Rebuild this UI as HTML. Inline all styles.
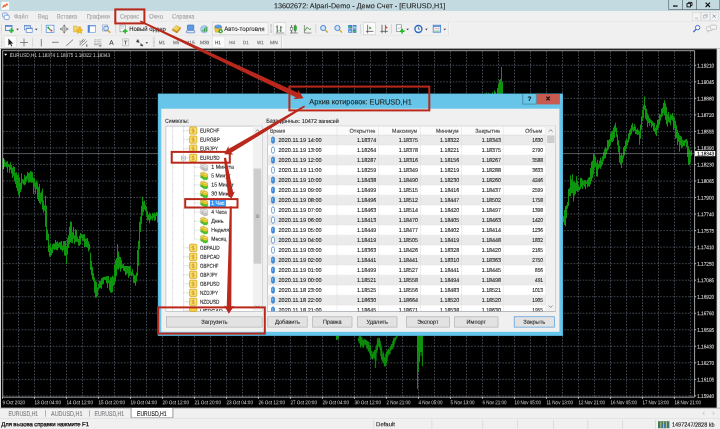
<!DOCTYPE html>
<html lang="ru"><head><meta charset="utf-8"><title>13602672: Alpari-Demo - Демо Счет - [EURUSD,H1]</title>
<style>
html,body{margin:0;padding:0}
body{width:720px;height:429px;overflow:hidden;position:relative;background:#f0f0f0;font-family:"Liberation Sans",sans-serif}
.t{position:absolute;left:0;top:0;white-space:nowrap;line-height:1;display:block;transform-origin:0 0;-webkit-text-stroke:0.1px currentColor}
svg{position:absolute;left:0;top:0;overflow:visible}
</style></head><body><div id="app" style="position:absolute;left:0;top:0;width:720px;height:429px;will-change:transform">
<svg width="720" height="429" viewBox="0 0 720 429"><rect x="0.00" y="0.00" width="720.00" height="11.20" fill="#c4dae1"/><rect x="1.50" y="1.80" width="7.60" height="8.00" fill="#fdfdfd"/></svg>
<svg width="720" height="12" viewBox="0 0 720 12"><path d="M2.6 7.6 L4.2 5.2 L5.2 6.3 L6.6 4.2 L8 5" fill="none" stroke="#e8642a" stroke-width="1.3"/></svg>
<span class="t" style="transform:translate(273.90px,2.13px) rotate(0.03deg) scale(1.0000,1);font-size:7.2px;color:#1c1c1c;letter-spacing:0.038px;">13602672: Alpari-Demo - Демо Счет - [EURUSD,H1]</span>
<svg width="720" height="429" viewBox="0 0 720 429"><rect x="668.30" y="0.00" width="51.70" height="9.80" fill="#c4dae1"/><path d="M668.60 0.00 V9.50 H719.70 V0.00" fill="none" stroke="#4a5558" stroke-width="0.6"/><rect x="682.30" y="0.00" width="0.60" height="9.60" fill="#4a5558"/><rect x="696.20" y="0.00" width="0.60" height="9.60" fill="#4a5558"/><rect x="673.00" y="5.40" width="4.60" height="1.30" fill="#111"/></svg>
<svg width="720" height="12" viewBox="0 0 720 12"><rect x="687" y="3.6" width="3.6" height="3.3" fill="none" stroke="#111" stroke-width="0.9"/><path d="M688.4 3.4 V2.4 H692 V5.6 H690.8" fill="none" stroke="#111" stroke-width="0.9"/><path d="M705.6 2.6 L710 7 M710 2.6 L705.6 7" stroke="#111" stroke-width="1.2"/></svg>
<svg width="720" height="429" viewBox="0 0 720 429"><rect x="0.00" y="11.20" width="720.00" height="10.40" fill="#f0f0f0"/><rect x="0.00" y="21.40" width="720.00" height="0.50" fill="#dcdcdc"/></svg>
<svg width="720" height="24" viewBox="0 0 720 24"><rect x="2.6" y="13" width="4.6" height="4" rx="0.8" fill="#fff" stroke="#6a8fd0" stroke-width="0.8"/><rect x="4.2" y="15.2" width="5" height="4.2" rx="0.8" fill="#fff" stroke="#6a8fd0" stroke-width="0.8"/></svg>
<span class="t" style="transform:translate(14.00px,13.52px) rotate(0.1deg) scale(0.8898,1);font-size:6.4px;color:#a2a2a2;">Файл</span>
<span class="t" style="transform:translate(38.00px,13.57px) rotate(0.1deg) scale(0.8637,1);font-size:6.4px;color:#a2a2a2;">Вид</span>
<span class="t" style="transform:translate(57.00px,13.47px) rotate(0.1deg) scale(0.8408,1);font-size:6.4px;color:#a2a2a2;">Вставка</span>
<span class="t" style="transform:translate(86.70px,13.47px) rotate(0.1deg) scale(0.9159,1);font-size:6.4px;color:#a2a2a2;">Графики</span>
<span class="t" style="transform:translate(120.00px,13.48px) rotate(0.1deg) scale(0.8669,1);font-size:6.4px;color:#a2a2a2;">Сервис</span>
<span class="t" style="transform:translate(149.00px,13.52px) rotate(0.1deg) scale(0.9414,1);font-size:6.4px;color:#a2a2a2;">Окно</span>
<span class="t" style="transform:translate(172.00px,13.47px) rotate(0.1deg) scale(0.8962,1);font-size:6.4px;color:#a2a2a2;">Справка</span>
<svg width="720" height="429" viewBox="0 0 720 429"><rect x="692.30" y="12.20" width="8.40" height="8.20" fill="#f4f4f4"/><rect x="692.55" y="12.45" width="7.90" height="7.70" fill="none" stroke="#d0d0d0" stroke-width="0.5"/><rect x="701.20" y="12.20" width="8.40" height="8.20" fill="#f4f4f4"/><rect x="701.45" y="12.45" width="7.90" height="7.70" fill="none" stroke="#d0d0d0" stroke-width="0.5"/><rect x="710.10" y="12.20" width="8.40" height="8.20" fill="#f4f4f4"/><rect x="710.35" y="12.45" width="7.90" height="7.70" fill="none" stroke="#d0d0d0" stroke-width="0.5"/></svg>
<svg width="720" height="24" viewBox="0 0 720 24"><path d="M695 18.2 h3" stroke="#a9b4c4" stroke-width="0.9"/><rect x="703.6" y="15.6" width="2.6" height="2.4" fill="none" stroke="#a9b4c4" stroke-width="0.7"/><path d="M704.8 15.4 v-1 h2.6 v2.4 h-1" fill="none" stroke="#a9b4c4" stroke-width="0.7"/><path d="M712.6 14.6 l3.2 3.2 m0 -3.2 l-3.2 3.2" stroke="#7f95b8" stroke-width="0.9"/></svg>
<svg width="720" height="429" viewBox="0 0 720 429"><rect x="0.00" y="21.90" width="720.00" height="26.60" fill="#f0f0f0"/><rect x="0.00" y="35.00" width="449.00" height="0.50" fill="#e2e2e2"/><rect x="448.60" y="22.50" width="0.60" height="12.50" fill="#cdcdcd"/><rect x="449.20" y="22.50" width="0.80" height="12.50" fill="#fafafa"/><rect x="281.20" y="36.00" width="0.70" height="12.00" fill="#c4c4c4"/><rect x="281.90" y="36.00" width="0.90" height="12.00" fill="#fafafa"/></svg>
<span class="t" style="transform:translate(85.80px,44.76px) rotate(0.03deg) scale(1.0000,1);font-size:3.2px;color:#333;">E</span>
<span class="t" style="transform:translate(99.60px,44.96px) rotate(0.03deg) scale(1.0000,1);font-size:3.2px;color:#333;">F</span>
<span class="t" style="transform:translate(109.20px,39.84px) rotate(0.03deg) scale(1.0000,1);font-size:6.6px;color:#333;">A</span>
<span class="t" style="transform:translate(123.95px,40.39px) rotate(0.03deg) scale(1.0000,1);font-size:5.4px;color:#222;">T</span>
<svg width="720" height="50" viewBox="0 0 720 50">
<path d="M1.4 24.5 V33.5" stroke="#b8b8b8" stroke-width="0.9" stroke-dasharray="0.6 0.6"/>
<path d="M1.8 37.5 V46.8" stroke="#b8b8b8" stroke-width="0.9" stroke-dasharray="0.6 0.6"/>
<rect x="5.4" y="25.4" width="6.6" height="5.2" fill="#eef4fc" stroke="#4a78c2" stroke-width="0.8"/><path d="M5.4 26.2 h6.6" stroke="#4a78c2" stroke-width="1"/>
<path d="M9.0 30.6 h4.8 M11.4 28.200000000000003 v4.8" stroke="#2bb52b" stroke-width="1.7"/>
<path d="M16.2 28.7 h2.6 l-1.3 1.5 z" fill="#333"/>
<rect x="24.4" y="25.4" width="6" height="4.4" fill="#f6f9fe" stroke="#5a86cc" stroke-width="0.7"/><path d="M24.4 25.9 h6" stroke="#5a86cc" stroke-width="0.9"/><rect x="26.2" y="28" width="6" height="4.4" fill="#f6f9fe" stroke="#5a86cc" stroke-width="0.7"/><path d="M26.2 28.5 h6" stroke="#5a86cc" stroke-width="0.9"/>
<path d="M35.0 28.7 h2.6 l-1.3 1.5 z" fill="#333"/>
<path d="M41.5 24 V33.5" stroke="#c4c4c4" stroke-width="0.6"/>
<rect x="46.2" y="25.2" width="7.8" height="7.4" fill="#f4f8ff" stroke="#4f8ad6" stroke-width="0.7"/><path d="M48 27.6 l2.4 2.4" stroke="#2c9a2c" stroke-width="1.1"/><circle cx="51.4" cy="30.6" r="1.1" fill="#e0552c"/><circle cx="48.2" cy="27.4" r="0.9" fill="#2c9a2c"/>
<circle cx="64.2" cy="29" r="2.4" fill="none" stroke="#666" stroke-width="0.6"/><path d="M64.2 24.8 v8.4 M60 29 h8.4" stroke="#666" stroke-width="0.5"/><path d="M64.2 24.6 l-1 1.3 h2 z M64.2 33.4 l-1 -1.3 h2 z M59.8 29 l1.3 -1 v2 z M68.6 29 l-1.3 -1 v2 z" fill="#666"/>
<path d="M73.6 26 h3 l0.8 0.9 h3.6 v5 h-7.4 z" fill="#f3d36a" stroke="#c9a030" stroke-width="0.5"/><path d="M79.6 27.6 l1 2 l2.2 0.3 l-1.6 1.5 l0.4 2.2 l-2 -1.1 l-2 1.1 l0.4 -2.2 l-1.6 -1.5 l2.2 -0.3 z" fill="#f6c21c" stroke="#c48f10" stroke-width="0.4"/>
<rect x="88" y="25.4" width="7.6" height="7" fill="#fbfdff" stroke="#5a8fd8" stroke-width="0.6"/><rect x="88" y="25.4" width="1.8" height="7" fill="#4a80d0"/><path d="M88 25.8 h7.6" stroke="#4a80d0" stroke-width="0.8"/>
<rect x="102.4" y="25" width="5.4" height="6" fill="#f2f6fb" stroke="#8aa0bc" stroke-width="0.6"/><circle cx="106" cy="28.4" r="2.4" fill="#cfe2f6" stroke="#4f7fbf" stroke-width="0.8"/><path d="M107.8 30.4 l2.6 2.4" stroke="#d9a62a" stroke-width="1.3"/>
<path d="M115.7 24 V33.5" stroke="#c4c4c4" stroke-width="0.6"/>
<rect x="120" y="25" width="5.4" height="6.8" fill="#fff" stroke="#7c8796" stroke-width="0.6"/><path d="M121 26.6 h3.4 M121 28 h3.4" stroke="#9aa5b4" stroke-width="0.5"/>
<path d="M122.9 31.2 h4.6 M125.2 28.9 v4.6" stroke="#2bb52b" stroke-width="1.7"/>
<path d="M172.6 29.2 l3.4 -3.8 l4.4 2.2 l-3.2 4 z" fill="#f4cf52" stroke="#b98a1c" stroke-width="0.45"/><path d="M172.6 29.2 l4.6 2.4 l-0.2 1.4 l-4.6 -2.5 z" fill="#d49a22" stroke="#a87612" stroke-width="0.35"/><path d="M177.2 31.6 l3.2 -4 l0 1.3 l-3.4 4.1 z" fill="#c98f1c" stroke="#a87612" stroke-width="0.35"/><path d="M174.2 28.6 l2.4 -2.4" stroke="#fbe9a8" stroke-width="0.6"/>
<rect x="187.4" y="25" width="6.4" height="4.8" rx="0.6" fill="#5d9be6" stroke="#2e62b4" stroke-width="0.6"/><rect x="186.4" y="30.6" width="8.4" height="2.2" rx="0.5" fill="#e9f0fa" stroke="#2e62b4" stroke-width="0.6"/>
<circle cx="204.2" cy="29.2" r="3.7" fill="#a9cdf0" stroke="#8aa9c8" stroke-width="0.5"/><path d="M203 31.6 v-1.6 M204.6 31.6 v-3.2 M206.2 31.6 v-4.8" stroke="#2c9a2c" stroke-width="1"/>
<rect x="212.3" y="22.7" width="55.8" height="12" fill="#f6f6f6" stroke="#cfcfcf" stroke-width="0.6"/>
<path d="M214.6 27.2 h7.2 l-0.8 5 h-5.6 z" fill="#f0c53a" stroke="#b48a1a" stroke-width="0.5"/><ellipse cx="218.2" cy="26.6" rx="3.4" ry="1.7" fill="#5c9ee2" stroke="#2f68b6" stroke-width="0.5"/><circle cx="220.6" cy="31.2" r="1.9" fill="#2fb52f" stroke="#1d7f1d" stroke-width="0.4"/><path d="M220 30.2 l1.6 1 l-1.6 1 z" fill="#fff"/>
<path d="M270.6 24 V33.5" stroke="#b8b8b8" stroke-width="0.9" stroke-dasharray="0.6 0.6"/>
<path d="M271.6 24 V33.5" stroke="#b8b8b8" stroke-width="0.9" stroke-dasharray="0.6 0.6"/>
<rect x="273.8" y="22.7" width="12" height="12" fill="#fafafa" stroke="#cfcfcf" stroke-width="0.6"/>
<path d="M277.2 25.4 v7 M280.8 26 v6" stroke="#333" stroke-width="0.8"/><path d="M275.8 26.8 h1.4 M277.2 31 h1.4 M280.8 27.4 h1.4 M279.4 30.4 h1.4" stroke="#2c9a2c" stroke-width="0.8"/><path d="M275.6 33 h8.6" stroke="#555" stroke-width="0.6"/>
<path d="M291.6 25 v8 M295.2 24.6 v8" stroke="#333" stroke-width="0.7"/><rect x="294" y="26" width="2.4" height="4.4" fill="#2fae2f" stroke="#1c6f1c" stroke-width="0.4"/><rect x="290.8" y="27.4" width="1.6" height="3" fill="#fff" stroke="#333" stroke-width="0.4"/><path d="M290 33 h7.8" stroke="#555" stroke-width="0.6"/>
<path d="M304.4 25 v8 h7" fill="none" stroke="#555" stroke-width="0.6"/><path d="M304.6 31 l2.4 -3.8 l2.2 2.2 l2 -0.6" fill="none" stroke="#2c9a2c" stroke-width="0.9"/>
<path d="M315.8 24 V33.5" stroke="#c4c4c4" stroke-width="0.6"/>
<circle cx="323.2" cy="28" r="2.6" fill="#cfe4f8" stroke="#3f7fd0" stroke-width="0.9"/><path d="M325.2 30.1 l2.6 2.5" stroke="#d9a62a" stroke-width="1.4"/>
<circle cx="337.4" cy="28" r="2.6" fill="#cfe4f8" stroke="#3f7fd0" stroke-width="0.9"/><path d="M339.4 30.1 l2.6 2.5" stroke="#d9a62a" stroke-width="1.4"/>
<rect x="348.2" y="25" width="3.8" height="3.6" fill="#3f7fd0"/><rect x="352.6" y="25" width="3.8" height="3.6" fill="#3f7fd0"/><rect x="348.2" y="29.2" width="3.8" height="3.6" fill="#3f7fd0"/><rect x="352.6" y="29.2" width="3.8" height="3.6" fill="#3f7fd0"/><rect x="348.8" y="26.4" width="2.6" height="1.6" fill="#49b949"/><rect x="353.2" y="30.6" width="2.6" height="1.6" fill="#49b949"/><rect x="353.2" y="26.4" width="2.6" height="1.6" fill="#a9cdf5"/><rect x="348.8" y="30.6" width="2.6" height="1.6" fill="#a9cdf5"/>
<path d="M360.6 24 V33.5" stroke="#c4c4c4" stroke-width="0.6"/>
<rect x="363.3" y="22.7" width="12" height="12" fill="#fafafa" stroke="#cfcfcf" stroke-width="0.6"/>
<path d="M367.6 24.8 v8.4 M366 31.4 h7.4" stroke="#444" stroke-width="0.7"/><path d="M369.4 26.4 l2.2 1.6 l-2.2 1.6 z" fill="#2c9a2c"/>
<path d="M382 24.8 v8.4 M385.4 24.8 v8.4 M380.4 31.4 h7.4" stroke="#444" stroke-width="0.7"/><path d="M385.6 26 l2.2 1.5 l-2.2 1.5 z" fill="#d04a2a"/>
<path d="M391.4 24 V33.5" stroke="#c4c4c4" stroke-width="0.6"/>
<rect x="396.6" y="24.8" width="5" height="6.6" fill="#fff" stroke="#6e7a8a" stroke-width="0.6"/><path d="M397.6 29.6 l1.2 -2 l1 1 l1 -2" fill="none" stroke="#888" stroke-width="0.5"/>
<path d="M399.8 31.2 h4.8 M402.2 28.8 v4.8" stroke="#2bb52b" stroke-width="1.7"/>
<path d="M406.3 28.7 h2.6 l-1.3 1.5 z" fill="#333"/>
<circle cx="418.4" cy="29" r="3.5" fill="#eaf2fc" stroke="#2f68c0" stroke-width="1.4"/><path d="M418.4 26.8 v2.4 h1.6" fill="none" stroke="#333" stroke-width="0.6"/>
<path d="M425.1 28.7 h2.6 l-1.3 1.5 z" fill="#333"/>
<rect x="433.2" y="25.2" width="7.4" height="7" fill="#f4f8ff" stroke="#3f7fd0" stroke-width="0.8"/><path d="M433.2 26.2 h7.4" stroke="#3f7fd0" stroke-width="1.2"/><path d="M434.4 29 l1.4 -1 l1.4 1 l1.4 -0.8 l1.2 0.8" fill="none" stroke="#d04a2a" stroke-width="0.5"/><path d="M434.4 31 h5.2" stroke="#2c9a2c" stroke-width="0.6"/>
<path d="M443.5 28.7 h2.6 l-1.3 1.5 z" fill="#333"/>
<circle cx="697.6" cy="27.6" r="2.2" fill="#fff" stroke="#2f62c8" stroke-width="0.9"/><path d="M696 29.4 l-2.6 2.6" stroke="#2f62c8" stroke-width="1.2"/>
<rect x="706.4" y="26.8" width="6" height="3.8" rx="1.2" fill="#f6f6f6" stroke="#a8a8a8" stroke-width="0.6"/><rect x="710.2" y="25.2" width="6.4" height="4" rx="1.2" fill="#f6f6f6" stroke="#a8a8a8" stroke-width="0.6"/><path d="M708 30.6 l-0.6 1.6 l1.8 -1.6" fill="#f6f6f6" stroke="#a8a8a8" stroke-width="0.5"/>
<rect x="4.2" y="36" width="12.4" height="11.4" fill="#fbfbfb" stroke="#d4d4d4" stroke-width="0.5"/>
<path d="M8.4 38.4 v7 l1.7 -1.6 l1.2 2.6 l0.9 -0.4 l-1.2 -2.5 h2.2 z" fill="#222"/>
<path d="M24 38.6 v7.8 M20 42.5 h8" stroke="#333" stroke-width="0.55"/>
<path d="M32.6 37.5 V47" stroke="#c4c4c4" stroke-width="0.6"/>
<path d="M41.3 39 v7.4" stroke="#555" stroke-width="0.7"/><path d="M52 42.3 h6.8" stroke="#555" stroke-width="0.7"/><path d="M66.3 45.8 l6.8 -6.2" stroke="#555" stroke-width="0.7"/>
<path d="M80 44.6 l5.6 -5 M81.6 46 l5.6 -5 M80.2 42.6 l4 -3.6" stroke="#555" stroke-width="0.6"/><path d="M80 40 v6 M82.4 39.4 v3" stroke="#777" stroke-width="0.4"/>
<path d="M94 39.8 h7.4 M94 41.6 h7.4 M94 43.4 h7.4" stroke="#666" stroke-width="0.5" stroke-dasharray="0.8 0.5"/><path d="M94 44.8 h5" stroke="#666" stroke-width="0.5"/>
<rect x="122.6" y="38.8" width="6" height="7" fill="none" stroke="#777" stroke-width="0.5" stroke-dasharray="0.7 0.5"/>
<path d="M136.6 40.2 l2.2 1.8 M138 39.6 l1.2 2.8 l-2.8 -0.6 z" stroke="#444" stroke-width="0.6" fill="#444"/><path d="M140 43.6 l2.6 2 M143 46 l-2.6 -0.4 l1.2 -1.8 z" stroke="#444" stroke-width="0.6" fill="#444"/>
<path d="M145.5 42.2 h2.6 l-1.3 1.5 z" fill="#333"/>
<path d="M153.4 37.5 V46.8" stroke="#b8b8b8" stroke-width="0.9" stroke-dasharray="0.6 0.6"/>
<path d="M154.4 37.5 V46.8" stroke="#b8b8b8" stroke-width="0.9" stroke-dasharray="0.6 0.6"/>
<rect x="212.5" y="36.2" width="12.4" height="11.4" fill="#fafafa" stroke="#dcdcdc" stroke-width="0.5"/>
</svg>
<span class="t" style="transform:translate(129.20px,26.08px) rotate(0.1deg) scale(0.9156,1);font-size:6.5px;color:#111;-webkit-text-stroke:0.04px #111">Новый ордер</span>
<span class="t" style="transform:translate(224.20px,26.07px) rotate(0.1deg) scale(0.9435,1);font-size:6.5px;color:#111;-webkit-text-stroke:0.04px #111">Авто-торговля</span>
<span class="t" style="transform:translate(158.70px,41.35px) rotate(0.1deg) scale(0.9255,1);font-size:4.9px;color:#666;">M1</span>
<span class="t" style="transform:translate(173.00px,41.35px) rotate(0.1deg) scale(0.9108,1);font-size:4.9px;color:#666;">M5</span>
<span class="t" style="transform:translate(185.00px,41.35px) rotate(0.03deg) scale(1.0000,1);font-size:4.9px;color:#666;letter-spacing:0.056px;">M15</span>
<span class="t" style="transform:translate(200.00px,41.35px) rotate(0.03deg) scale(1.0000,1);font-size:4.9px;color:#666;letter-spacing:-0.111px;">M30</span>
<span class="t" style="transform:translate(215.00px,41.35px) rotate(0.1deg) scale(0.9259,1);font-size:4.9px;color:#444;">H1</span>
<span class="t" style="transform:translate(229.20px,41.35px) rotate(0.1deg) scale(0.9259,1);font-size:4.9px;color:#666;">H4</span>
<span class="t" style="transform:translate(243.00px,41.35px) rotate(0.1deg) scale(0.9100,1);font-size:4.9px;color:#666;">D1</span>
<span class="t" style="transform:translate(257.00px,41.35px) rotate(0.1deg) scale(0.9116,1);font-size:4.9px;color:#666;">W1</span>
<span class="t" style="transform:translate(270.00px,41.35px) rotate(0.03deg) scale(1.0000,1);font-size:4.9px;color:#666;letter-spacing:0.190px;">MN</span>
<svg width="720" height="429" viewBox="0 0 720 429"><rect x="0.00" y="48.50" width="720.00" height="360.00" fill="#000"/><rect x="0.00" y="48.00" width="720.00" height="0.50" fill="#fafafa"/><rect x="0.00" y="48.50" width="720.00" height="0.60" fill="#808080"/><rect x="0.00" y="49.00" width="720.00" height="1.00" fill="#262626"/><rect x="0.00" y="48.50" width="1.00" height="360.00" fill="#d8d8d8"/><rect x="716.70" y="48.50" width="3.30" height="360.00" fill="#e6e6e6"/><rect x="716.70" y="48.50" width="0.70" height="360.00" fill="#6a6a6a"/><rect x="717.40" y="48.50" width="1.00" height="360.00" fill="#fdfdfd"/></svg>
<svg width="720" height="429" viewBox="0 0 720 429">
<path d="M18.5 51 V397 M34.5 51 V397 M50.5 51 V397 M66.5 51 V397 M82.5 51 V397 M98.5 51 V397 M114.5 51 V397 M130.5 51 V397 M146.5 51 V397 M162.5 51 V397 M178.5 51 V397 M194.5 51 V397 M210.5 51 V397 M226.5 51 V397 M242.5 51 V397 M258.5 51 V397 M274.5 51 V397 M290.5 51 V397 M306.5 51 V397 M322.5 51 V397 M338.5 51 V397 M354.5 51 V397 M370.5 51 V397 M386.5 51 V397 M402.5 51 V397 M418.5 51 V397 M434.5 51 V397 M450.5 51 V397 M466.5 51 V397 M482.5 51 V397 M498.5 51 V397 M514.5 51 V397 M530.5 51 V397 M546.5 51 V397 M562.5 51 V397 M578.5 51 V397 M594.5 51 V397 M610.5 51 V397 M626.5 51 V397 M642.5 51 V397 M658.5 51 V397 M674.5 51 V397 M690.5 51 V397 M3 65.30 H694.5 M3 81.83 H694.5 M3 98.36 H694.5 M3 114.89 H694.5 M3 131.42 H694.5 M3 147.95 H694.5 M3 164.48 H694.5 M3 181.01 H694.5 M3 197.54 H694.5 M3 214.07 H694.5 M3 230.60 H694.5 M3 247.13 H694.5 M3 263.66 H694.5 M3 280.19 H694.5 M3 296.72 H694.5 M3 313.25 H694.5 M3 329.78 H694.5 M3 346.31 H694.5 M3 362.84 H694.5 M3 379.37 H694.5 M3 395.90 H694.5" stroke="#6f7d8d" stroke-width="0.85" stroke-dasharray="1.7 1.4" fill="none" opacity="0.66"/>
<path d="M2.7 50.7 V397.2 H694.6 V50.7 Z" fill="none" stroke="#c9c9c9" stroke-width="0.8"/>
<path d="M2.5 397 v1.8 M34.5 397 v1.8 M66.5 397 v1.8 M98.5 397 v1.8 M130.5 397 v1.8 M162.5 397 v1.8 M194.5 397 v1.8 M226.5 397 v1.8 M258.5 397 v1.8 M290.5 397 v1.8 M322.5 397 v1.8 M354.5 397 v1.8 M386.5 397 v1.8 M418.5 397 v1.8 M450.5 397 v1.8 M482.5 397 v1.8 M514.5 397 v1.8 M546.5 397 v1.8 M578.5 397 v1.8 M610.5 397 v1.8 M642.5 397 v1.8 M674.5 397 v1.8 M694.6 65.30 h1.6 M694.6 81.83 h1.6 M694.6 98.36 h1.6 M694.6 114.89 h1.6 M694.6 131.42 h1.6 M694.6 147.95 h1.6 M694.6 164.48 h1.6 M694.6 181.01 h1.6 M694.6 197.54 h1.6 M694.6 214.07 h1.6 M694.6 230.60 h1.6 M694.6 247.13 h1.6 M694.6 263.66 h1.6 M694.6 280.19 h1.6 M694.6 296.72 h1.6 M694.6 313.25 h1.6 M694.6 329.78 h1.6 M694.6 346.31 h1.6 M694.6 362.84 h1.6 M694.6 379.37 h1.6 M694.6 395.90 h1.6" stroke="#d8d8d8" stroke-width="0.8" fill="none"/>
<path d="M3.50 161.8V169.2 M4.50 159.5V167.0 M5.50 162.3V166.6 M6.50 161.6V167.5 M7.50 161.2V172.5 M8.50 164.1V167.2 M9.50 164.2V172.9 M10.50 162.4V169.9 M11.50 165.1V173.6 M12.50 167.7V178.0 M13.50 166.1V175.9 M14.50 167.0V181.4 M15.50 172.8V184.0 M16.50 172.3V187.9 M17.50 175.2V191.3 M18.50 173.8V195.1 M19.50 177.4V197.8 M20.50 182.9V192.2 M21.50 173.3V189.5 M22.50 179.1V183.3 M23.50 179.5V184.5 M24.50 174.8V185.1 M25.50 176.7V184.5 M26.50 175.6V181.5 M27.50 172.0V179.4 M28.50 172.9V182.8 M29.50 172.6V182.5 M30.50 171.2V182.2 M31.50 171.4V182.7 M32.50 172.2V182.6 M33.50 177.5V194.0 M34.50 177.8V187.2 M35.50 182.4V194.0 M36.50 180.7V189.3 M37.50 182.4V199.0 M38.50 186.9V201.0 M39.50 184.0V203.0 M40.50 193.2V204.3 M41.50 191.4V201.7 M42.50 188.7V209.5 M43.50 200.5V212.5 M44.50 205.3V210.8 M45.50 195.8V226.7 M46.50 205.8V240.3 M47.50 229.4V240.3 M48.50 233.8V251.9 M49.50 245.2V256.5 M50.50 243.2V256.7 M51.50 247.5V255.0 M52.50 244.3V253.0 M53.50 243.6V249.1 M54.50 243.5V250.0 M55.50 240.0V249.3 M56.50 242.1V250.0 M57.50 241.3V250.4 M58.50 243.3V248.3 M59.50 242.2V246.9 M60.50 241.8V249.6 M61.50 240.9V249.9 M62.50 245.4V251.6 M63.50 241.0V250.0 M64.50 241.0V255.5 M65.50 241.0V255.9 M66.50 245.9V264.0 M67.50 238.2V254.8 M68.50 235.3V248.0 M69.50 226.8V244.0 M70.50 221.5V242.2 M71.50 221.8V242.8 M72.50 232.2V243.2 M73.50 226.8V238.9 M74.50 235.3V244.2 M75.50 229.2V241.9 M76.50 230.1V241.8 M77.50 236.6V242.0 M78.50 239.0V245.5 M79.50 235.5V245.9 M80.50 233.0V244.6 M81.50 234.0V238.1 M82.50 235.0V240.4 M83.50 234.4V241.2 M84.50 234.1V247.0 M85.50 238.6V247.0 M86.50 238.5V247.0 M87.50 238.1V247.8 M88.50 241.2V251.5 M89.50 244.0V249.8 M90.50 252.7V270.0 M91.50 261.0V275.3 M92.50 267.0V279.5 M93.50 273.0V281.5 M94.50 277.5V292.7 M95.50 280.5V297.8 M96.50 281.8V297.4 M97.50 287.4V296.0 M98.50 284.1V289.5 M99.50 281.2V288.6 M100.50 281.1V287.8 M101.50 278.3V288.7 M102.50 277.7V284.6 M103.50 277.0V283.9 M104.50 276.8V279.9 M105.50 276.6V280.1 M106.50 276.3V283.1 M107.50 276.1V287.9 M108.50 276.1V283.2 M109.50 280.6V290.5 M110.50 277.1V292.5 M111.50 277.5V292.8 M112.50 275.6V292.2 M113.50 277.0V286.0 M114.50 264.5V284.5 M115.50 260.1V281.6 M116.50 258.2V276.0 M117.50 244.0V269.3 M118.50 251.7V269.7 M119.50 256.4V267.8 M120.50 257.1V271.6 M121.50 260.1V268.8 M122.50 264.5V268.0 M123.50 263.8V270.7 M124.50 266.0V271.3 M125.50 266.0V275.3 M126.50 266.0V274.5 M127.50 266.0V273.4 M128.50 266.2V277.9 M129.50 266.0V276.1 M130.50 266.7V274.8 M131.50 271.6V276.1 M132.50 269.3V275.5 M133.50 273.5V282.7 M134.50 275.1V283.2 M135.50 275.4V285.7 M136.50 272.6V281.6 M137.50 250.0V276.0 M138.50 240.8V266.0 M139.50 221.9V249.0 M140.50 216.5V232.0 M141.50 205.8V223.8 M142.50 196.8V215.6 M143.50 201.5V212.0 M144.50 200.7V209.7 M145.50 204.7V211.2 M146.50 206.5V216.9 M147.50 211.0V220.6 M148.50 214.6V220.2 M149.50 212.6V223.2 M150.50 213.7V220.4 M151.50 215.9V218.9 M152.50 212.9V220.6 M153.50 213.6V217.9 M154.50 212.5V220.9 M155.50 214.0V220.2 M156.50 212.0V216.1 M157.50 212.5V222.5 M158.50 216.4V219.4 M159.50 213.7V223.2" stroke="#0d960d" stroke-width="1" fill="none"/>
<path d="M336.50 335.6V340.0 M337.50 334.0V339.5 M338.50 334.5V338.7 M339.50 334.0V335.0" stroke="#0d960d" stroke-width="1" fill="none"/>
<path d="M563.50 216.2V222.3 M564.50 210.0V225.0 M565.50 206.0V226.4 M566.50 205.2V218.0 M567.50 202.0V208.7 M568.50 189.0V206.0 M569.50 187.9V196.2 M570.50 175.3V196.3 M571.50 179.3V193.1 M572.50 174.2V193.4 M573.50 181.5V201.5 M574.50 181.3V195.8 M575.50 182.8V194.0 M576.50 176.2V190.9 M577.50 181.3V192.2 M578.50 185.4V190.6 M579.50 186.7V190.5 M580.50 177.8V189.1 M581.50 177.8V186.8 M582.50 179.6V188.9 M583.50 181.0V185.4 M584.50 180.2V186.8 M585.50 180.1V189.3 M586.50 181.4V183.9 M587.50 179.4V187.3 M588.50 177.6V186.1 M589.50 177.0V186.8 M590.50 168.2V184.4 M591.50 161.8V181.1 M592.50 160.6V178.1 M593.50 154.0V174.5 M594.50 155.0V168.5 M595.50 156.8V166.7 M596.50 162.6V176.3 M597.50 159.7V176.7 M598.50 164.0V169.2 M599.50 160.6V167.6 M600.50 157.7V168.9 M601.50 160.3V166.6 M602.50 156.3V164.6 M603.50 152.4V161.0 M604.50 149.2V158.7 M605.50 146.9V158.2 M606.50 148.1V154.4 M607.50 140.0V150.7 M608.50 140.2V149.5 M609.50 139.1V147.1 M610.50 133.7V145.2 M611.50 132.1V141.8 M612.50 130.6V142.1 M613.50 127.5V140.7 M614.50 125.4V137.8 M615.50 122.8V131.9 M616.50 127.6V136.8 M617.50 134.4V145.5 M618.50 140.3V152.3 M619.50 146.0V162.7 M620.50 155.3V164.3 M621.50 153.6V168.1 M622.50 155.4V162.8 M623.50 147.3V158.5 M624.50 145.9V155.5 M625.50 140.6V151.0 M626.50 138.6V148.9 M627.50 139.7V145.4 M628.50 133.5V142.4 M629.50 130.2V139.1 M630.50 128.5V135.6 M631.50 125.0V134.0 M632.50 123.0V130.4 M633.50 127.0V131.2 M634.50 124.3V130.9 M635.50 126.4V133.9 M636.50 129.6V134.2 M637.50 128.5V135.0 M638.50 130.1V134.6 M639.50 131.7V144.9 M640.50 124.6V138.6 M641.50 116.5V129.7 M642.50 109.6V121.0 M643.50 105.2V118.0 M644.50 96.5V109.9 M645.50 105.5V118.8 M646.50 108.7V120.5 M647.50 113.2V127.2 M648.50 115.6V123.1 M649.50 118.0V125.6 M650.50 119.2V122.9 M651.50 120.4V127.6 M652.50 121.2V125.9 M653.50 122.5V130.9 M654.50 123.0V131.9 M655.50 127.8V134.4 M656.50 124.8V136.0 M657.50 119.8V130.0 M658.50 119.5V128.0 M659.50 113.7V124.8 M660.50 114.4V120.7 M661.50 108.8V117.3 M662.50 107.7V116.0 M663.50 103.0V113.3 M664.50 100.3V115.3 M665.50 103.4V119.8 M666.50 106.9V124.2 M667.50 114.3V126.5 M668.50 112.0V122.0 M669.50 116.6V122.8 M670.50 114.1V125.4 M671.50 115.1V119.9 M672.50 113.0V120.8 M673.50 116.1V130.0 M674.50 117.5V128.1 M675.50 120.8V138.8 M676.50 125.2V138.1 M677.50 130.0V145.2 M678.50 132.8V141.7 M679.50 135.2V151.7 M680.50 135.8V145.2 M681.50 136.6V148.2 M682.50 139.9V147.0 M683.50 140.6V146.0 M684.50 140.1V146.0 M685.50 139.5V142.9 M686.50 138.9V147.0 M687.50 140.7V157.0 M688.50 146.1V164.8 M689.50 149.4V165.4 M690.50 151.4V162.7 M691.50 150.3V156.0" stroke="#0d960d" stroke-width="1" fill="none"/>
<path d="M358.50 338.2V340.9 M359.20 334.0V343.6 M359.90 334.3V342.6 M360.60 335.3V347.7 M361.30 337.1V345.8 M362.00 337.3V344.8 M362.70 339.9V347.2 M363.40 340.2V347.8 M364.10 339.0V345.3 M364.80 339.4V344.4 M365.50 339.8V344.7 M366.20 340.2V345.8 M366.90 340.7V349.3 M367.60 341.1V348.5 M368.30 341.6V351.6 M369.00 342.0V351.1 M369.70 344.7V353.5 M370.40 345.1V356.1 M371.10 350.7V358.2 M371.80 351.0V359.0 M372.50 353.7V359.5 M373.20 351.6V358.4 M373.90 351.9V357.9 M374.60 350.1V358.7 M375.30 350.0V368.0 M376.00 346.9V361.0 M376.70 344.6V352.9 M377.40 338.6V350.6 M378.10 337.5V346.8 M378.80 339.8V346.5 M379.50 338.0V347.5 M380.20 340.8V350.3 M380.90 344.0V356.0 M381.60 347.5V359.5 M382.30 354.3V361.2 M383.00 351.3V362.0 M383.70 353.2V363.5 M384.40 357.3V366.1 M385.10 357.4V366.8 M385.80 353.8V365.8 M386.50 352.0V363.4 M387.20 350.6V361.2 M387.90 349.5V356.7 M388.60 348.7V354.8 M389.30 350.3V354.4 M390.00 347.0V353.9 M390.70 345.8V351.0 M391.40 344.3V349.8 M392.10 344.0V349.3 M392.80 341.0V349.0 M393.50 338.4V346.8 M394.20 337.4V344.6 M394.90 338.6V342.3 M395.60 337.3V340.6 M396.30 335.9V338.9 M397.00 334.0V337.3" stroke="#0d960d" stroke-width="1.0" fill="none"/>
<path d="M417.5 334 V389 M418.3 334 V372" stroke="#0d960d" stroke-width="1"/><rect x="417" y="334" width="6" height="18" fill="#0d960d"/><path d="M419.5 352 V362 M421 352 V356 M422.4 352 V366" stroke="#0d960d" stroke-width="1"/>
<path d="M486.5 92.6V96 M488.5 92.8V96 M492.5 92.4V96 M494.5 90.5V96 M495.5 92V96 M497.5 88V96 M498.5 84V96 M499.5 80V96 M500.5 79V96 M501.5 66.8V96 M502.5 82V96" stroke="#0d960d" stroke-width="1" fill="none"/>
<path d="M3.4 158 V169" stroke="#35e335" stroke-width="1.2"/>
<path d="M3 153.6 H694.5" stroke="#8e98a2" stroke-width="0.6"/>
</svg>
<svg width="720" height="429" viewBox="0 0 720 429"><path d="M4.2 53.8 h3 l-1.5 2 z" fill="#fff"/></svg>
<span class="t" style="transform:translate(9.80px,52.88px) rotate(0.1deg) scale(0.8533,1);font-size:5.5px;color:#d0d0d0;-webkit-text-stroke:0">EURUSD,H1  1.18374 1.18375 1.18322 1.18343</span>
<span class="t" style="transform:translate(697.20px,63.38px) rotate(0.1deg) scale(0.8551,1);font-size:5.5px;color:#d8d8d8;">1.19210</span>
<span class="t" style="transform:translate(697.20px,79.91px) rotate(0.1deg) scale(0.8551,1);font-size:5.5px;color:#d8d8d8;">1.19045</span>
<span class="t" style="transform:translate(697.20px,96.44px) rotate(0.1deg) scale(0.8551,1);font-size:5.5px;color:#d8d8d8;">1.18880</span>
<span class="t" style="transform:translate(697.20px,112.97px) rotate(0.1deg) scale(0.8551,1);font-size:5.5px;color:#d8d8d8;">1.18720</span>
<span class="t" style="transform:translate(697.20px,129.50px) rotate(0.1deg) scale(0.8551,1);font-size:5.5px;color:#d8d8d8;">1.18555</span>
<span class="t" style="transform:translate(697.20px,146.03px) rotate(0.1deg) scale(0.8551,1);font-size:5.5px;color:#d8d8d8;">1.18390</span>
<span class="t" style="transform:translate(697.20px,162.56px) rotate(0.1deg) scale(0.8551,1);font-size:5.5px;color:#d8d8d8;">1.18230</span>
<span class="t" style="transform:translate(697.20px,179.09px) rotate(0.1deg) scale(0.8551,1);font-size:5.5px;color:#d8d8d8;">1.18065</span>
<span class="t" style="transform:translate(697.20px,195.62px) rotate(0.1deg) scale(0.8551,1);font-size:5.5px;color:#d8d8d8;">1.17900</span>
<span class="t" style="transform:translate(697.20px,212.15px) rotate(0.1deg) scale(0.8551,1);font-size:5.5px;color:#d8d8d8;">1.17740</span>
<span class="t" style="transform:translate(697.20px,228.68px) rotate(0.1deg) scale(0.8551,1);font-size:5.5px;color:#d8d8d8;">1.17575</span>
<span class="t" style="transform:translate(697.20px,245.21px) rotate(0.1deg) scale(0.8551,1);font-size:5.5px;color:#d8d8d8;">1.17410</span>
<span class="t" style="transform:translate(697.20px,261.74px) rotate(0.1deg) scale(0.8551,1);font-size:5.5px;color:#d8d8d8;">1.17250</span>
<span class="t" style="transform:translate(697.20px,278.27px) rotate(0.1deg) scale(0.8551,1);font-size:5.5px;color:#d8d8d8;">1.17085</span>
<span class="t" style="transform:translate(697.20px,294.80px) rotate(0.1deg) scale(0.8551,1);font-size:5.5px;color:#d8d8d8;">1.16920</span>
<span class="t" style="transform:translate(697.20px,311.33px) rotate(0.1deg) scale(0.8551,1);font-size:5.5px;color:#d8d8d8;">1.16760</span>
<span class="t" style="transform:translate(697.20px,327.86px) rotate(0.1deg) scale(0.8551,1);font-size:5.5px;color:#d8d8d8;">1.16595</span>
<span class="t" style="transform:translate(697.20px,344.39px) rotate(0.1deg) scale(0.8551,1);font-size:5.5px;color:#d8d8d8;">1.16430</span>
<span class="t" style="transform:translate(697.20px,360.92px) rotate(0.1deg) scale(0.8551,1);font-size:5.5px;color:#d8d8d8;">1.16270</span>
<span class="t" style="transform:translate(697.20px,377.45px) rotate(0.1deg) scale(0.8551,1);font-size:5.5px;color:#d8d8d8;">1.16105</span>
<span class="t" style="transform:translate(697.20px,393.98px) rotate(0.1deg) scale(0.8551,1);font-size:5.5px;color:#d8d8d8;">1.15940</span>
<svg width="720" height="429" viewBox="0 0 720 429"><rect x="695.00" y="150.90" width="20.20" height="5.30" fill="#f6f6f6"/></svg>
<span class="t" style="transform:translate(697.20px,151.58px) rotate(0.1deg) scale(0.8551,1);font-size:5.5px;color:#000;">1.18343</span>
<span class="t" style="transform:translate(2.40px,400.19px) rotate(0.1deg) scale(0.8474,1);font-size:5.5px;color:#dcdcdc;-webkit-text-stroke:0">9 Oct 2020</span>
<span class="t" style="transform:translate(34.40px,400.20px) rotate(0.1deg) scale(0.8446,1);font-size:5.5px;color:#dcdcdc;-webkit-text-stroke:0">13 Oct 04:00</span>
<span class="t" style="transform:translate(66.40px,400.20px) rotate(0.1deg) scale(0.8446,1);font-size:5.5px;color:#dcdcdc;-webkit-text-stroke:0">14 Oct 12:00</span>
<span class="t" style="transform:translate(98.40px,400.20px) rotate(0.1deg) scale(0.8446,1);font-size:5.5px;color:#dcdcdc;-webkit-text-stroke:0">15 Oct 20:00</span>
<span class="t" style="transform:translate(130.40px,400.20px) rotate(0.1deg) scale(0.8446,1);font-size:5.5px;color:#dcdcdc;-webkit-text-stroke:0">19 Oct 04:00</span>
<span class="t" style="transform:translate(162.40px,400.20px) rotate(0.1deg) scale(0.8446,1);font-size:5.5px;color:#dcdcdc;-webkit-text-stroke:0">20 Oct 12:00</span>
<span class="t" style="transform:translate(194.40px,400.20px) rotate(0.1deg) scale(0.8446,1);font-size:5.5px;color:#dcdcdc;-webkit-text-stroke:0">21 Oct 20:00</span>
<span class="t" style="transform:translate(226.40px,400.20px) rotate(0.1deg) scale(0.8446,1);font-size:5.5px;color:#dcdcdc;-webkit-text-stroke:0">23 Oct 04:00</span>
<span class="t" style="transform:translate(258.40px,400.20px) rotate(0.1deg) scale(0.8446,1);font-size:5.5px;color:#dcdcdc;-webkit-text-stroke:0">26 Oct 12:00</span>
<span class="t" style="transform:translate(290.40px,400.20px) rotate(0.1deg) scale(0.8446,1);font-size:5.5px;color:#dcdcdc;-webkit-text-stroke:0">27 Oct 20:00</span>
<span class="t" style="transform:translate(322.40px,400.20px) rotate(0.1deg) scale(0.8446,1);font-size:5.5px;color:#dcdcdc;-webkit-text-stroke:0">29 Oct 04:00</span>
<span class="t" style="transform:translate(354.40px,400.20px) rotate(0.1deg) scale(0.8446,1);font-size:5.5px;color:#dcdcdc;-webkit-text-stroke:0">30 Oct 12:00</span>
<span class="t" style="transform:translate(386.40px,400.19px) rotate(0.1deg) scale(0.8159,1);font-size:5.5px;color:#dcdcdc;-webkit-text-stroke:0">2 Nov 21:00</span>
<span class="t" style="transform:translate(418.40px,400.19px) rotate(0.1deg) scale(0.8159,1);font-size:5.5px;color:#dcdcdc;-webkit-text-stroke:0">4 Nov 05:00</span>
<span class="t" style="transform:translate(450.40px,400.19px) rotate(0.1deg) scale(0.8159,1);font-size:5.5px;color:#dcdcdc;-webkit-text-stroke:0">5 Nov 13:00</span>
<span class="t" style="transform:translate(482.40px,400.19px) rotate(0.1deg) scale(0.8159,1);font-size:5.5px;color:#dcdcdc;-webkit-text-stroke:0">6 Nov 21:00</span>
<span class="t" style="transform:translate(514.40px,400.20px) rotate(0.1deg) scale(0.8130,1);font-size:5.5px;color:#dcdcdc;-webkit-text-stroke:0">10 Nov 05:00</span>
<span class="t" style="transform:translate(546.40px,400.20px) rotate(0.1deg) scale(0.8233,1);font-size:5.5px;color:#dcdcdc;-webkit-text-stroke:0">11 Nov 13:00</span>
<span class="t" style="transform:translate(578.40px,400.20px) rotate(0.1deg) scale(0.8130,1);font-size:5.5px;color:#dcdcdc;-webkit-text-stroke:0">12 Nov 21:00</span>
<span class="t" style="transform:translate(610.40px,400.20px) rotate(0.1deg) scale(0.8130,1);font-size:5.5px;color:#dcdcdc;-webkit-text-stroke:0">16 Nov 05:00</span>
<span class="t" style="transform:translate(642.40px,400.20px) rotate(0.1deg) scale(0.8130,1);font-size:5.5px;color:#dcdcdc;-webkit-text-stroke:0">17 Nov 13:00</span>
<span class="t" style="transform:translate(674.40px,400.20px) rotate(0.1deg) scale(0.8130,1);font-size:5.5px;color:#dcdcdc;-webkit-text-stroke:0">18 Nov 21:00</span>
<svg width="720" height="429" viewBox="0 0 720 429"><rect x="0.00" y="407.80" width="720.00" height="11.00" fill="#f0f0f0"/><rect x="0.00" y="407.80" width="720.00" height="0.60" fill="#9a9a9a"/><rect x="130.80" y="408.00" width="42.40" height="10.20" fill="#fff"/><path d="M131.10 408.00 V417.90 H172.90 V408.00" fill="none" stroke="#555" stroke-width="0.6"/></svg>
<span class="t" style="transform:translate(8.60px,410.90px) rotate(0.1deg) scale(0.7532,1);font-size:6.8px;color:#7c7c80;">EURUSD,H1</span>
<svg width="720" height="429" viewBox="0 0 720 429"><rect x="45.30" y="410.20" width="0.60" height="6.40" fill="#8a8a8a"/></svg>
<span class="t" style="transform:translate(51.00px,410.90px) rotate(0.1deg) scale(0.8016,1);font-size:6.8px;color:#7c7c80;">AUDUSD,H1</span>
<svg width="720" height="429" viewBox="0 0 720 429"><rect x="89.40" y="410.20" width="0.60" height="6.40" fill="#8a8a8a"/></svg>
<span class="t" style="transform:translate(94.50px,410.90px) rotate(0.1deg) scale(0.7532,1);font-size:6.8px;color:#7c7c80;">EURUSD,H1</span>
<span class="t" style="transform:translate(137.00px,410.90px) rotate(0.1deg) scale(0.7532,1);font-size:6.8px;color:#111;">EURUSD,H1</span>
<svg width="720" height="429" viewBox="0 0 720 429"><path d="M704.5 411.8 l-1.6 1.6 l1.6 1.6 M712.6 411.8 l1.6 1.6 l-1.6 1.6" fill="none" stroke="#b4b4b4" stroke-width="0.8"/></svg>
<svg width="720" height="429" viewBox="0 0 720 429"><rect x="0.00" y="418.60" width="720.00" height="10.40" fill="#f0f0f0"/><rect x="0.00" y="418.40" width="720.00" height="0.60" fill="#dadada"/></svg>
<span class="t" style="transform:translate(1.30px,421.31px) rotate(0.03deg) scale(1.0000,1);font-size:6.0px;color:#000;letter-spacing:-0.107px;-webkit-text-stroke:0.2px #000">Для вызова справки нажмите F1</span>
<span class="t" style="transform:translate(376.10px,421.32px) rotate(0.03deg) scale(1.0000,1);font-size:6.0px;color:#222;letter-spacing:-0.030px;">Default</span>
<svg width="720" height="429" viewBox="0 0 720 429"><rect x="373.50" y="420.00" width="0.60" height="9.00" fill="#cfcfcf"/><rect x="431.60" y="420.00" width="0.60" height="9.00" fill="#cfcfcf"/><rect x="482.50" y="420.00" width="0.60" height="9.00" fill="#cfcfcf"/><rect x="517.30" y="420.00" width="0.60" height="9.00" fill="#cfcfcf"/><rect x="553.20" y="420.00" width="0.60" height="9.00" fill="#cfcfcf"/><rect x="587.50" y="420.00" width="0.60" height="9.00" fill="#cfcfcf"/><rect x="622.30" y="420.00" width="0.60" height="9.00" fill="#cfcfcf"/><rect x="655.30" y="420.00" width="0.60" height="9.00" fill="#cfcfcf"/><rect x="658.00" y="421.20" width="11.40" height="7.00" fill="#4d7a46"/></svg>
<svg width="720" height="429" viewBox="0 0 720 429"><path d="M659.4 428 v-2.4 M662.2 428 v-3.8 M665 428 v-5.2 M667.8 428 v-6.4" stroke="#3b6fb0" stroke-width="1.3"/><path d="M660.8 428 v-6.6 M663.6 428 v-6.6 M666.4 428 v-6.6" stroke="#d6e6c4" stroke-width="0.7"/></svg>
<span class="t" style="transform:translate(672.00px,421.60px) rotate(0.1deg) scale(0.9185,1);font-size:6.0px;color:#111;">1497247/2828 kb</span>
<svg width="720" height="429" viewBox="0 0 720 429"><rect x="157.80" y="93.50" width="405.20" height="242.40" fill="#4aa6cc"/><rect x="158.30" y="94.00" width="404.20" height="241.40" fill="#66c5e8"/><rect x="161.30" y="108.70" width="398.10" height="223.10" fill="#f0f0f0"/></svg>
<span class="t" style="transform:translate(309.30px,98.27px) rotate(0.1deg) scale(0.9615,1);font-size:7.6px;color:#1a1a1a;">Архив котировок: EURUSD,H1</span>
<svg width="720" height="429" viewBox="0 0 720 429"><rect x="522.40" y="94.00" width="14.30" height="10.40" fill="#66c5e8"/><path d="M522.70 94.00 V104.10 H536.40 V94.00" fill="none" stroke="#3d6f86" stroke-width="0.6"/></svg>
<span class="t" style="transform:translate(527.58px,96.02px) rotate(0.03deg) scale(1.0000,1);font-size:6.6px;color:#111;font-weight:bold;">?</span>
<svg width="720" height="429" viewBox="0 0 720 429"><rect x="536.70" y="94.00" width="23.20" height="10.40" fill="#c85a50"/></svg>
<svg width="720" height="429" viewBox="0 0 720 429"><path d="M546.4 96.7 l3.4 3.6 m0 -3.6 l-3.4 3.6" stroke="#1a1010" stroke-width="1.2"/></svg>
<span class="t" style="transform:translate(165.00px,118.78px) rotate(0.1deg) scale(0.8990,1);font-size:5.8px;color:#222;">Символы:</span>
<span class="t" style="transform:translate(266.30px,118.83px) rotate(0.1deg) scale(0.9398,1);font-size:5.8px;color:#222;">База данных: 10472 записей</span>
<svg width="720" height="429" viewBox="0 0 720 429"><rect x="165.60" y="125.80" width="97.30" height="185.90" fill="#fff"/><rect x="165.90" y="126.10" width="96.70" height="185.30" fill="none" stroke="#a3a9b0" stroke-width="0.6"/><rect x="252.90" y="126.40" width="9.40" height="184.70" fill="#f1f1f1"/><rect x="253.60" y="168.50" width="7.60" height="95.20" fill="#cdcdcd"/></svg>
<svg width="720" height="429" viewBox="0 0 720 429">
<path d="M255.6 131.6 l1.9 -1.9 l1.9 1.9 M255.6 305.6 l1.9 1.9 l1.9 -1.9" fill="none" stroke="#606060" stroke-width="0.7"/>
<path d="M255.8 215 h3.4 M255.8 216.2 h3.4 M255.8 217.4 h3.4" stroke="#707070" stroke-width="0.5"/>
<path d="M172.7 126.5 V311 M183.6 126.5 V311 M183.6 130.6 H189 M183.6 139.6 H189 M183.6 148.6 H189 M183.6 157.8 H189 M183.6 247.8 H189 M183.6 256.8 H189 M183.6 265.8 H189 M183.6 274.8 H189 M183.6 283.8 H189 M183.6 292.8 H189 M183.6 301.8 H189 M183.6 310.8 H189 M194.2 162.5 V239 M194.2 167.1 H200 M194.2 175.9 H200 M194.2 184.9 H200 M194.2 193.9 H200 M194.2 203.0 H200 M194.2 212.0 H200 M194.2 221.1 H200 M194.2 230.1 H200 M194.2 239.1 H200" stroke="#a4a4a4" stroke-width="0.6" stroke-dasharray="0.6 0.6" fill="none"/>
<rect x="181.5" y="156.1" width="3.8" height="3.9" fill="#fff" stroke="#8f8f8f" stroke-width="0.5"/><path d="M182.3 158.05 h2.2" stroke="#333" stroke-width="0.6"/>
<rect x="189.5" y="126.9" width="7.4" height="7.4" rx="1.2" fill="#f7d448" stroke="#c79a1c" stroke-width="0.6"/><rect x="190.5" y="127.9" width="5.4" height="5.4" rx="0.8" fill="#fbe27a"/><path d="M194.5 129.1 h-2 q-0.9 0 -0.9 0.8 q0 0.7 0.9 0.7 h1.2 q0.9 0 0.9 0.8 q0 0.8 -0.9 0.8 h-2.1 M193.2 128.3 v4.8" fill="none" stroke="#c08a14" stroke-width="0.55"/>
<rect x="189.5" y="135.9" width="7.4" height="7.4" rx="1.2" fill="#f7d448" stroke="#c79a1c" stroke-width="0.6"/><rect x="190.5" y="136.9" width="5.4" height="5.4" rx="0.8" fill="#fbe27a"/><path d="M194.5 138.1 h-2 q-0.9 0 -0.9 0.8 q0 0.7 0.9 0.7 h1.2 q0.9 0 0.9 0.8 q0 0.8 -0.9 0.8 h-2.1 M193.2 137.3 v4.8" fill="none" stroke="#c08a14" stroke-width="0.55"/>
<rect x="189.5" y="144.9" width="7.4" height="7.4" rx="1.2" fill="#f7d448" stroke="#c79a1c" stroke-width="0.6"/><rect x="190.5" y="145.9" width="5.4" height="5.4" rx="0.8" fill="#fbe27a"/><path d="M194.5 147.1 h-2 q-0.9 0 -0.9 0.8 q0 0.7 0.9 0.7 h1.2 q0.9 0 0.9 0.8 q0 0.8 -0.9 0.8 h-2.1 M193.2 146.3 v4.8" fill="none" stroke="#c08a14" stroke-width="0.55"/>
<rect x="189.5" y="154.1" width="7.4" height="7.4" rx="1.2" fill="#f7d448" stroke="#c79a1c" stroke-width="0.6"/><rect x="190.5" y="155.1" width="5.4" height="5.4" rx="0.8" fill="#fbe27a"/><path d="M194.5 156.3 h-2 q-0.9 0 -0.9 0.8 q0 0.7 0.9 0.7 h1.2 q0.9 0 0.9 0.8 q0 0.8 -0.9 0.8 h-2.1 M193.2 155.5 v4.8" fill="none" stroke="#c08a14" stroke-width="0.55"/>
<rect x="189.5" y="244.1" width="7.4" height="7.4" rx="1.2" fill="#f7d448" stroke="#c79a1c" stroke-width="0.6"/><rect x="190.5" y="245.1" width="5.4" height="5.4" rx="0.8" fill="#fbe27a"/><path d="M194.5 246.3 h-2 q-0.9 0 -0.9 0.8 q0 0.7 0.9 0.7 h1.2 q0.9 0 0.9 0.8 q0 0.8 -0.9 0.8 h-2.1 M193.2 245.5 v4.8" fill="none" stroke="#c08a14" stroke-width="0.55"/>
<rect x="189.5" y="253.1" width="7.4" height="7.4" rx="1.2" fill="#f7d448" stroke="#c79a1c" stroke-width="0.6"/><rect x="190.5" y="254.1" width="5.4" height="5.4" rx="0.8" fill="#fbe27a"/><path d="M194.5 255.3 h-2 q-0.9 0 -0.9 0.8 q0 0.7 0.9 0.7 h1.2 q0.9 0 0.9 0.8 q0 0.8 -0.9 0.8 h-2.1 M193.2 254.5 v4.8" fill="none" stroke="#c08a14" stroke-width="0.55"/>
<rect x="189.5" y="262.1" width="7.4" height="7.4" rx="1.2" fill="#f7d448" stroke="#c79a1c" stroke-width="0.6"/><rect x="190.5" y="263.1" width="5.4" height="5.4" rx="0.8" fill="#fbe27a"/><path d="M194.5 264.3 h-2 q-0.9 0 -0.9 0.8 q0 0.7 0.9 0.7 h1.2 q0.9 0 0.9 0.8 q0 0.8 -0.9 0.8 h-2.1 M193.2 263.5 v4.8" fill="none" stroke="#c08a14" stroke-width="0.55"/>
<rect x="189.5" y="271.1" width="7.4" height="7.4" rx="1.2" fill="#f7d448" stroke="#c79a1c" stroke-width="0.6"/><rect x="190.5" y="272.1" width="5.4" height="5.4" rx="0.8" fill="#fbe27a"/><path d="M194.5 273.3 h-2 q-0.9 0 -0.9 0.8 q0 0.7 0.9 0.7 h1.2 q0.9 0 0.9 0.8 q0 0.8 -0.9 0.8 h-2.1 M193.2 272.5 v4.8" fill="none" stroke="#c08a14" stroke-width="0.55"/>
<rect x="189.5" y="280.1" width="7.4" height="7.4" rx="1.2" fill="#f7d448" stroke="#c79a1c" stroke-width="0.6"/><rect x="190.5" y="281.1" width="5.4" height="5.4" rx="0.8" fill="#fbe27a"/><path d="M194.5 282.3 h-2 q-0.9 0 -0.9 0.8 q0 0.7 0.9 0.7 h1.2 q0.9 0 0.9 0.8 q0 0.8 -0.9 0.8 h-2.1 M193.2 281.5 v4.8" fill="none" stroke="#c08a14" stroke-width="0.55"/>
<rect x="189.5" y="289.1" width="7.4" height="7.4" rx="1.2" fill="#f7d448" stroke="#c79a1c" stroke-width="0.6"/><rect x="190.5" y="290.1" width="5.4" height="5.4" rx="0.8" fill="#fbe27a"/><path d="M194.5 291.3 h-2 q-0.9 0 -0.9 0.8 q0 0.7 0.9 0.7 h1.2 q0.9 0 0.9 0.8 q0 0.8 -0.9 0.8 h-2.1 M193.2 290.5 v4.8" fill="none" stroke="#c08a14" stroke-width="0.55"/>
<rect x="189.5" y="298.1" width="7.4" height="7.4" rx="1.2" fill="#f7d448" stroke="#c79a1c" stroke-width="0.6"/><rect x="190.5" y="299.1" width="5.4" height="5.4" rx="0.8" fill="#fbe27a"/><path d="M194.5 300.3 h-2 q-0.9 0 -0.9 0.8 q0 0.7 0.9 0.7 h1.2 q0.9 0 0.9 0.8 q0 0.8 -0.9 0.8 h-2.1 M193.2 299.5 v4.8" fill="none" stroke="#c08a14" stroke-width="0.55"/>
<rect x="189.5" y="307.1" width="7.4" height="4.4" rx="1.2" fill="#f6cf3c" stroke="#c99a1a" stroke-width="0.6"/>
<path d="M200.60 166.40 v2.20 a2.3 0.9 0 0 0 4.6 0 v-2.20 z" fill="#c4c4c4" stroke="#a0a0a0" stroke-width="0.35"/><path d="M200.60 164.20 v2.20 a2.3 0.9 0 0 0 4.6 0 v-2.20 z" fill="#dedede" stroke="#a8a8a8" stroke-width="0.35"/><ellipse cx="202.90" cy="164.20" rx="2.3" ry="0.9" fill="#f2f2f2" stroke="#a8a8a8" stroke-width="0.35"/><path d="M202.90 167.50 v2.60 a2.4 0.9 0 0 0 4.8 0 v-2.60 z" fill="#c4c4c4" stroke="#a0a0a0" stroke-width="0.35"/><path d="M202.90 165.40 v2.10 a2.4 0.9 0 0 0 4.8 0 v-2.10 z" fill="#dedede" stroke="#a8a8a8" stroke-width="0.35"/><ellipse cx="205.30" cy="165.40" rx="2.4" ry="0.9" fill="#f2f2f2" stroke="#a8a8a8" stroke-width="0.35"/>
<path d="M200.60 175.20 v2.20 a2.3 0.9 0 0 0 4.6 0 v-2.20 z" fill="#46c624" stroke="#2f9a1c" stroke-width="0.35"/><path d="M200.60 173.00 v2.20 a2.3 0.9 0 0 0 4.6 0 v-2.20 z" fill="#efcf2e" stroke="#b0901c" stroke-width="0.35"/><ellipse cx="202.90" cy="173.00" rx="2.3" ry="0.9" fill="#f8e36a" stroke="#b0901c" stroke-width="0.35"/><path d="M202.90 176.30 v2.60 a2.4 0.9 0 0 0 4.8 0 v-2.60 z" fill="#46c624" stroke="#2f9a1c" stroke-width="0.35"/><path d="M202.90 174.20 v2.10 a2.4 0.9 0 0 0 4.8 0 v-2.10 z" fill="#efcf2e" stroke="#b0901c" stroke-width="0.35"/><ellipse cx="205.30" cy="174.20" rx="2.4" ry="0.9" fill="#f8e36a" stroke="#b0901c" stroke-width="0.35"/>
<path d="M200.60 184.20 v2.20 a2.3 0.9 0 0 0 4.6 0 v-2.20 z" fill="#46c624" stroke="#2f9a1c" stroke-width="0.35"/><path d="M200.60 182.00 v2.20 a2.3 0.9 0 0 0 4.6 0 v-2.20 z" fill="#efcf2e" stroke="#b0901c" stroke-width="0.35"/><ellipse cx="202.90" cy="182.00" rx="2.3" ry="0.9" fill="#f8e36a" stroke="#b0901c" stroke-width="0.35"/><path d="M202.90 185.30 v2.60 a2.4 0.9 0 0 0 4.8 0 v-2.60 z" fill="#46c624" stroke="#2f9a1c" stroke-width="0.35"/><path d="M202.90 183.20 v2.10 a2.4 0.9 0 0 0 4.8 0 v-2.10 z" fill="#efcf2e" stroke="#b0901c" stroke-width="0.35"/><ellipse cx="205.30" cy="183.20" rx="2.4" ry="0.9" fill="#f8e36a" stroke="#b0901c" stroke-width="0.35"/>
<path d="M200.60 193.20 v2.20 a2.3 0.9 0 0 0 4.6 0 v-2.20 z" fill="#46c624" stroke="#2f9a1c" stroke-width="0.35"/><path d="M200.60 191.00 v2.20 a2.3 0.9 0 0 0 4.6 0 v-2.20 z" fill="#efcf2e" stroke="#b0901c" stroke-width="0.35"/><ellipse cx="202.90" cy="191.00" rx="2.3" ry="0.9" fill="#f8e36a" stroke="#b0901c" stroke-width="0.35"/><path d="M202.90 194.30 v2.60 a2.4 0.9 0 0 0 4.8 0 v-2.60 z" fill="#46c624" stroke="#2f9a1c" stroke-width="0.35"/><path d="M202.90 192.20 v2.10 a2.4 0.9 0 0 0 4.8 0 v-2.10 z" fill="#efcf2e" stroke="#b0901c" stroke-width="0.35"/><ellipse cx="205.30" cy="192.20" rx="2.4" ry="0.9" fill="#f8e36a" stroke="#b0901c" stroke-width="0.35"/>
<path d="M200.60 202.30 v2.20 a2.3 0.9 0 0 0 4.6 0 v-2.20 z" fill="#46c624" stroke="#2f9a1c" stroke-width="0.35"/><path d="M200.60 200.10 v2.20 a2.3 0.9 0 0 0 4.6 0 v-2.20 z" fill="#efcf2e" stroke="#b0901c" stroke-width="0.35"/><ellipse cx="202.90" cy="200.10" rx="2.3" ry="0.9" fill="#f8e36a" stroke="#b0901c" stroke-width="0.35"/><path d="M202.90 203.40 v2.60 a2.4 0.9 0 0 0 4.8 0 v-2.60 z" fill="#46c624" stroke="#2f9a1c" stroke-width="0.35"/><path d="M202.90 201.30 v2.10 a2.4 0.9 0 0 0 4.8 0 v-2.10 z" fill="#efcf2e" stroke="#b0901c" stroke-width="0.35"/><ellipse cx="205.30" cy="201.30" rx="2.4" ry="0.9" fill="#f8e36a" stroke="#b0901c" stroke-width="0.35"/>
<path d="M200.60 211.30 v2.20 a2.3 0.9 0 0 0 4.6 0 v-2.20 z" fill="#c4c4c4" stroke="#a0a0a0" stroke-width="0.35"/><path d="M200.60 209.10 v2.20 a2.3 0.9 0 0 0 4.6 0 v-2.20 z" fill="#dedede" stroke="#a8a8a8" stroke-width="0.35"/><ellipse cx="202.90" cy="209.10" rx="2.3" ry="0.9" fill="#f2f2f2" stroke="#a8a8a8" stroke-width="0.35"/><path d="M202.90 212.40 v2.60 a2.4 0.9 0 0 0 4.8 0 v-2.60 z" fill="#c4c4c4" stroke="#a0a0a0" stroke-width="0.35"/><path d="M202.90 210.30 v2.10 a2.4 0.9 0 0 0 4.8 0 v-2.10 z" fill="#dedede" stroke="#a8a8a8" stroke-width="0.35"/><ellipse cx="205.30" cy="210.30" rx="2.4" ry="0.9" fill="#f2f2f2" stroke="#a8a8a8" stroke-width="0.35"/>
<path d="M200.60 220.40 v2.20 a2.3 0.9 0 0 0 4.6 0 v-2.20 z" fill="#46c624" stroke="#2f9a1c" stroke-width="0.35"/><path d="M200.60 218.20 v2.20 a2.3 0.9 0 0 0 4.6 0 v-2.20 z" fill="#efcf2e" stroke="#b0901c" stroke-width="0.35"/><ellipse cx="202.90" cy="218.20" rx="2.3" ry="0.9" fill="#f8e36a" stroke="#b0901c" stroke-width="0.35"/><path d="M202.90 221.50 v2.60 a2.4 0.9 0 0 0 4.8 0 v-2.60 z" fill="#46c624" stroke="#2f9a1c" stroke-width="0.35"/><path d="M202.90 219.40 v2.10 a2.4 0.9 0 0 0 4.8 0 v-2.10 z" fill="#efcf2e" stroke="#b0901c" stroke-width="0.35"/><ellipse cx="205.30" cy="219.40" rx="2.4" ry="0.9" fill="#f8e36a" stroke="#b0901c" stroke-width="0.35"/>
<path d="M200.60 229.40 v2.20 a2.3 0.9 0 0 0 4.6 0 v-2.20 z" fill="#46c624" stroke="#2f9a1c" stroke-width="0.35"/><path d="M200.60 227.20 v2.20 a2.3 0.9 0 0 0 4.6 0 v-2.20 z" fill="#efcf2e" stroke="#b0901c" stroke-width="0.35"/><ellipse cx="202.90" cy="227.20" rx="2.3" ry="0.9" fill="#f8e36a" stroke="#b0901c" stroke-width="0.35"/><path d="M202.90 230.50 v2.60 a2.4 0.9 0 0 0 4.8 0 v-2.60 z" fill="#46c624" stroke="#2f9a1c" stroke-width="0.35"/><path d="M202.90 228.40 v2.10 a2.4 0.9 0 0 0 4.8 0 v-2.10 z" fill="#efcf2e" stroke="#b0901c" stroke-width="0.35"/><ellipse cx="205.30" cy="228.40" rx="2.4" ry="0.9" fill="#f8e36a" stroke="#b0901c" stroke-width="0.35"/>
<path d="M200.60 238.40 v2.20 a2.3 0.9 0 0 0 4.6 0 v-2.20 z" fill="#46c624" stroke="#2f9a1c" stroke-width="0.35"/><path d="M200.60 236.20 v2.20 a2.3 0.9 0 0 0 4.6 0 v-2.20 z" fill="#efcf2e" stroke="#b0901c" stroke-width="0.35"/><ellipse cx="202.90" cy="236.20" rx="2.3" ry="0.9" fill="#f8e36a" stroke="#b0901c" stroke-width="0.35"/><path d="M202.90 239.50 v2.60 a2.4 0.9 0 0 0 4.8 0 v-2.60 z" fill="#46c624" stroke="#2f9a1c" stroke-width="0.35"/><path d="M202.90 237.40 v2.10 a2.4 0.9 0 0 0 4.8 0 v-2.10 z" fill="#efcf2e" stroke="#b0901c" stroke-width="0.35"/><ellipse cx="205.30" cy="237.40" rx="2.4" ry="0.9" fill="#f8e36a" stroke="#b0901c" stroke-width="0.35"/>
</svg>
<span class="t" style="transform:translate(200.00px,128.54px) rotate(0.1deg) scale(0.8314,1);font-size:5.6px;color:#222;">EURCHF</span>
<span class="t" style="transform:translate(200.00px,137.54px) rotate(0.1deg) scale(0.8372,1);font-size:5.6px;color:#222;">EURGBP</span>
<span class="t" style="transform:translate(200.00px,146.54px) rotate(0.1deg) scale(0.8147,1);font-size:5.6px;color:#222;">EURJPY</span>
<span class="t" style="transform:translate(200.00px,155.74px) rotate(0.1deg) scale(0.8288,1);font-size:5.6px;color:#222;">EURUSD</span>
<span class="t" style="transform:translate(200.00px,245.74px) rotate(0.1deg) scale(0.8436,1);font-size:5.6px;color:#222;">GBPAUD</span>
<span class="t" style="transform:translate(200.00px,254.74px) rotate(0.1deg) scale(0.8287,1);font-size:5.6px;color:#222;">GBPCAD</span>
<span class="t" style="transform:translate(200.00px,263.74px) rotate(0.1deg) scale(0.7971,1);font-size:5.6px;color:#222;">GBPCHF</span>
<span class="t" style="transform:translate(200.00px,272.74px) rotate(0.1deg) scale(0.7965,1);font-size:5.6px;color:#222;">GBPJPY</span>
<span class="t" style="transform:translate(200.00px,281.74px) rotate(0.1deg) scale(0.8245,1);font-size:5.6px;color:#222;">GBPUSD</span>
<span class="t" style="transform:translate(200.00px,290.74px) rotate(0.1deg) scale(0.8264,1);font-size:5.6px;color:#222;">NZDJPY</span>
<span class="t" style="transform:translate(200.00px,299.74px) rotate(0.1deg) scale(0.8357,1);font-size:5.6px;color:#222;">NZDUSD</span>
<div style="position:absolute;left:200px;top:307.6px;width:24px;height:3.6px;overflow:hidden"><span class="t" style="transform:translate(0px,0.9px) rotate(0.03deg);font-size:5.6px;color:#222;letter-spacing:-0.15px">USDCAD</span></div>
<svg width="720" height="429" viewBox="0 0 720 429"><rect x="210.00" y="199.00" width="15.90" height="8.20" fill="#3399ff"/></svg>
<span class="t" style="transform:translate(211.30px,164.74px) rotate(0.1deg) scale(0.9511,1);font-size:5.6px;color:#222;">1 Минута</span>
<span class="t" style="transform:translate(211.30px,173.56px) rotate(0.1deg) scale(0.9082,1);font-size:5.6px;color:#222;">5 Минут</span>
<span class="t" style="transform:translate(211.30px,182.60px) rotate(0.1deg) scale(0.9278,1);font-size:5.6px;color:#222;">15 Минут</span>
<span class="t" style="transform:translate(211.30px,191.60px) rotate(0.1deg) scale(0.9278,1);font-size:5.6px;color:#222;">30 Минут</span>
<span class="t" style="transform:translate(211.30px,200.73px) rotate(0.1deg) scale(0.9080,1);font-size:5.6px;color:#fff;">1 Час</span>
<span class="t" style="transform:translate(211.30px,209.69px) rotate(0.1deg) scale(0.8949,1);font-size:5.6px;color:#222;">4 Часа</span>
<span class="t" style="transform:translate(211.30px,218.73px) rotate(0.1deg) scale(0.9522,1);font-size:5.6px;color:#222;">День</span>
<span class="t" style="transform:translate(211.30px,227.69px) rotate(0.1deg) scale(0.9113,1);font-size:5.6px;color:#222;">Неделя</span>
<span class="t" style="transform:translate(211.30px,236.71px) rotate(0.1deg) scale(0.8944,1);font-size:5.6px;color:#222;">Месяц</span>
<svg width="720" height="429" viewBox="0 0 720 429"><rect x="267.20" y="125.80" width="288.60" height="185.90" fill="#fff"/><rect x="267.50" y="126.10" width="288.00" height="185.30" fill="none" stroke="#a3a9b0" stroke-width="0.6"/><rect x="267.80" y="126.40" width="287.40" height="8.70" fill="#fbfbfb"/><rect x="267.80" y="135.10" width="278.30" height="10.00" fill="#ebebeb"/><rect x="267.80" y="144.80" width="278.30" height="0.40" fill="#dedede"/></svg>
<span class="t" style="transform:translate(278.50px,138.04px) rotate(0.03deg) scale(1.0000,1);font-size:5.6px;color:#1e1e1e;letter-spacing:0.001px;">2020.11.19 14:00</span>
<span class="t" style="transform:translate(356.90px,138.04px) rotate(0.1deg) scale(0.9534,1);font-size:5.6px;color:#1e1e1e;">1.18374</span>
<span class="t" style="transform:translate(398.70px,138.04px) rotate(0.1deg) scale(0.9534,1);font-size:5.6px;color:#1e1e1e;">1.18375</span>
<span class="t" style="transform:translate(440.00px,138.04px) rotate(0.1deg) scale(0.9534,1);font-size:5.6px;color:#1e1e1e;">1.18322</span>
<span class="t" style="transform:translate(481.70px,138.04px) rotate(0.1deg) scale(0.9534,1);font-size:5.6px;color:#1e1e1e;">1.18343</span>
<span class="t" style="transform:translate(532.20px,138.04px) rotate(0.1deg) scale(0.8669,1);font-size:5.6px;color:#1e1e1e;">1630</span>
<svg width="720" height="429" viewBox="0 0 720 429"><rect x="267.80" y="154.80" width="278.30" height="0.40" fill="#dedede"/></svg>
<span class="t" style="transform:translate(278.50px,148.04px) rotate(0.03deg) scale(1.0000,1);font-size:5.6px;color:#1e1e1e;letter-spacing:0.001px;">2020.11.19 13:00</span>
<span class="t" style="transform:translate(356.90px,148.04px) rotate(0.1deg) scale(0.9534,1);font-size:5.6px;color:#1e1e1e;">1.18264</span>
<span class="t" style="transform:translate(398.70px,148.04px) rotate(0.1deg) scale(0.9534,1);font-size:5.6px;color:#1e1e1e;">1.18378</span>
<span class="t" style="transform:translate(440.00px,148.04px) rotate(0.1deg) scale(0.9534,1);font-size:5.6px;color:#1e1e1e;">1.18221</span>
<span class="t" style="transform:translate(481.70px,148.04px) rotate(0.1deg) scale(0.9534,1);font-size:5.6px;color:#1e1e1e;">1.18375</span>
<span class="t" style="transform:translate(532.20px,148.04px) rotate(0.1deg) scale(0.8669,1);font-size:5.6px;color:#1e1e1e;">2790</span>
<svg width="720" height="429" viewBox="0 0 720 429"><rect x="267.80" y="155.10" width="278.30" height="10.00" fill="#ebebeb"/><rect x="267.80" y="164.80" width="278.30" height="0.40" fill="#dedede"/></svg>
<span class="t" style="transform:translate(278.50px,158.04px) rotate(0.03deg) scale(1.0000,1);font-size:5.6px;color:#1e1e1e;letter-spacing:0.001px;">2020.11.19 12:00</span>
<span class="t" style="transform:translate(356.90px,158.04px) rotate(0.1deg) scale(0.9534,1);font-size:5.6px;color:#1e1e1e;">1.18287</span>
<span class="t" style="transform:translate(398.70px,158.04px) rotate(0.1deg) scale(0.9534,1);font-size:5.6px;color:#1e1e1e;">1.18316</span>
<span class="t" style="transform:translate(440.00px,158.04px) rotate(0.1deg) scale(0.9534,1);font-size:5.6px;color:#1e1e1e;">1.18156</span>
<span class="t" style="transform:translate(481.70px,158.04px) rotate(0.1deg) scale(0.9534,1);font-size:5.6px;color:#1e1e1e;">1.18267</span>
<span class="t" style="transform:translate(532.20px,158.04px) rotate(0.1deg) scale(0.8669,1);font-size:5.6px;color:#1e1e1e;">3588</span>
<svg width="720" height="429" viewBox="0 0 720 429"><rect x="267.80" y="174.80" width="278.30" height="0.40" fill="#dedede"/></svg>
<span class="t" style="transform:translate(278.50px,168.04px) rotate(0.03deg) scale(1.0000,1);font-size:5.6px;color:#1e1e1e;letter-spacing:0.027px;">2020.11.19 11:00</span>
<span class="t" style="transform:translate(356.90px,168.04px) rotate(0.1deg) scale(0.9534,1);font-size:5.6px;color:#1e1e1e;">1.18259</span>
<span class="t" style="transform:translate(398.70px,168.04px) rotate(0.1deg) scale(0.9534,1);font-size:5.6px;color:#1e1e1e;">1.18349</span>
<span class="t" style="transform:translate(440.00px,168.04px) rotate(0.1deg) scale(0.9534,1);font-size:5.6px;color:#1e1e1e;">1.18219</span>
<span class="t" style="transform:translate(481.70px,168.04px) rotate(0.1deg) scale(0.9534,1);font-size:5.6px;color:#1e1e1e;">1.18288</span>
<span class="t" style="transform:translate(532.20px,168.04px) rotate(0.1deg) scale(0.8669,1);font-size:5.6px;color:#1e1e1e;">3633</span>
<svg width="720" height="429" viewBox="0 0 720 429"><rect x="267.80" y="175.10" width="278.30" height="10.00" fill="#ebebeb"/><rect x="267.80" y="184.80" width="278.30" height="0.40" fill="#dedede"/></svg>
<span class="t" style="transform:translate(278.50px,178.04px) rotate(0.03deg) scale(1.0000,1);font-size:5.6px;color:#1e1e1e;letter-spacing:0.001px;">2020.11.19 10:00</span>
<span class="t" style="transform:translate(356.90px,178.04px) rotate(0.1deg) scale(0.9534,1);font-size:5.6px;color:#1e1e1e;">1.18438</span>
<span class="t" style="transform:translate(398.70px,178.04px) rotate(0.1deg) scale(0.9534,1);font-size:5.6px;color:#1e1e1e;">1.18490</span>
<span class="t" style="transform:translate(440.00px,178.04px) rotate(0.1deg) scale(0.9534,1);font-size:5.6px;color:#1e1e1e;">1.18230</span>
<span class="t" style="transform:translate(481.70px,178.04px) rotate(0.1deg) scale(0.9534,1);font-size:5.6px;color:#1e1e1e;">1.18260</span>
<span class="t" style="transform:translate(532.20px,178.04px) rotate(0.1deg) scale(0.8669,1);font-size:5.6px;color:#1e1e1e;">4246</span>
<svg width="720" height="429" viewBox="0 0 720 429"><rect x="267.80" y="194.80" width="278.30" height="0.40" fill="#dedede"/></svg>
<span class="t" style="transform:translate(278.50px,188.04px) rotate(0.03deg) scale(1.0000,1);font-size:5.6px;color:#1e1e1e;letter-spacing:0.001px;">2020.11.19 09:00</span>
<span class="t" style="transform:translate(356.90px,188.04px) rotate(0.1deg) scale(0.9534,1);font-size:5.6px;color:#1e1e1e;">1.18499</span>
<span class="t" style="transform:translate(398.70px,188.04px) rotate(0.1deg) scale(0.9534,1);font-size:5.6px;color:#1e1e1e;">1.18515</span>
<span class="t" style="transform:translate(440.00px,188.04px) rotate(0.1deg) scale(0.9534,1);font-size:5.6px;color:#1e1e1e;">1.18416</span>
<span class="t" style="transform:translate(481.70px,188.04px) rotate(0.1deg) scale(0.9534,1);font-size:5.6px;color:#1e1e1e;">1.18437</span>
<span class="t" style="transform:translate(532.20px,188.04px) rotate(0.1deg) scale(0.8669,1);font-size:5.6px;color:#1e1e1e;">2599</span>
<svg width="720" height="429" viewBox="0 0 720 429"><rect x="267.80" y="195.10" width="278.30" height="10.00" fill="#ebebeb"/><rect x="267.80" y="204.80" width="278.30" height="0.40" fill="#dedede"/></svg>
<span class="t" style="transform:translate(278.50px,198.04px) rotate(0.03deg) scale(1.0000,1);font-size:5.6px;color:#1e1e1e;letter-spacing:0.001px;">2020.11.19 08:00</span>
<span class="t" style="transform:translate(356.90px,198.04px) rotate(0.1deg) scale(0.9534,1);font-size:5.6px;color:#1e1e1e;">1.18496</span>
<span class="t" style="transform:translate(398.70px,198.04px) rotate(0.1deg) scale(0.9534,1);font-size:5.6px;color:#1e1e1e;">1.18512</span>
<span class="t" style="transform:translate(440.00px,198.04px) rotate(0.1deg) scale(0.9534,1);font-size:5.6px;color:#1e1e1e;">1.18447</span>
<span class="t" style="transform:translate(481.70px,198.04px) rotate(0.1deg) scale(0.9534,1);font-size:5.6px;color:#1e1e1e;">1.18502</span>
<span class="t" style="transform:translate(532.20px,198.04px) rotate(0.1deg) scale(0.8669,1);font-size:5.6px;color:#1e1e1e;">1758</span>
<svg width="720" height="429" viewBox="0 0 720 429"><rect x="267.80" y="214.80" width="278.30" height="0.40" fill="#dedede"/></svg>
<span class="t" style="transform:translate(278.50px,208.04px) rotate(0.03deg) scale(1.0000,1);font-size:5.6px;color:#1e1e1e;letter-spacing:0.001px;">2020.11.19 07:00</span>
<span class="t" style="transform:translate(356.90px,208.04px) rotate(0.1deg) scale(0.9534,1);font-size:5.6px;color:#1e1e1e;">1.18463</span>
<span class="t" style="transform:translate(398.70px,208.04px) rotate(0.1deg) scale(0.9534,1);font-size:5.6px;color:#1e1e1e;">1.18514</span>
<span class="t" style="transform:translate(440.00px,208.04px) rotate(0.1deg) scale(0.9534,1);font-size:5.6px;color:#1e1e1e;">1.18420</span>
<span class="t" style="transform:translate(481.70px,208.04px) rotate(0.1deg) scale(0.9534,1);font-size:5.6px;color:#1e1e1e;">1.18497</span>
<span class="t" style="transform:translate(532.20px,208.04px) rotate(0.1deg) scale(0.8669,1);font-size:5.6px;color:#1e1e1e;">1398</span>
<svg width="720" height="429" viewBox="0 0 720 429"><rect x="267.80" y="215.10" width="278.30" height="10.00" fill="#ebebeb"/><rect x="267.80" y="224.80" width="278.30" height="0.40" fill="#dedede"/></svg>
<span class="t" style="transform:translate(278.50px,218.04px) rotate(0.03deg) scale(1.0000,1);font-size:5.6px;color:#1e1e1e;letter-spacing:0.001px;">2020.11.19 06:00</span>
<span class="t" style="transform:translate(356.90px,218.04px) rotate(0.1deg) scale(0.9534,1);font-size:5.6px;color:#1e1e1e;">1.18413</span>
<span class="t" style="transform:translate(398.70px,218.04px) rotate(0.1deg) scale(0.9534,1);font-size:5.6px;color:#1e1e1e;">1.18470</span>
<span class="t" style="transform:translate(440.00px,218.04px) rotate(0.1deg) scale(0.9534,1);font-size:5.6px;color:#1e1e1e;">1.18405</span>
<span class="t" style="transform:translate(481.70px,218.04px) rotate(0.1deg) scale(0.9534,1);font-size:5.6px;color:#1e1e1e;">1.18463</span>
<span class="t" style="transform:translate(532.20px,218.04px) rotate(0.1deg) scale(0.8669,1);font-size:5.6px;color:#1e1e1e;">1420</span>
<svg width="720" height="429" viewBox="0 0 720 429"><rect x="267.80" y="234.80" width="278.30" height="0.40" fill="#dedede"/></svg>
<span class="t" style="transform:translate(278.50px,228.04px) rotate(0.03deg) scale(1.0000,1);font-size:5.6px;color:#1e1e1e;letter-spacing:0.001px;">2020.11.19 05:00</span>
<span class="t" style="transform:translate(356.90px,228.04px) rotate(0.1deg) scale(0.9534,1);font-size:5.6px;color:#1e1e1e;">1.18449</span>
<span class="t" style="transform:translate(398.70px,228.04px) rotate(0.1deg) scale(0.9534,1);font-size:5.6px;color:#1e1e1e;">1.18477</span>
<span class="t" style="transform:translate(440.00px,228.04px) rotate(0.1deg) scale(0.9534,1);font-size:5.6px;color:#1e1e1e;">1.18402</span>
<span class="t" style="transform:translate(481.70px,228.04px) rotate(0.1deg) scale(0.9534,1);font-size:5.6px;color:#1e1e1e;">1.18414</span>
<span class="t" style="transform:translate(532.20px,228.04px) rotate(0.1deg) scale(0.8669,1);font-size:5.6px;color:#1e1e1e;">1236</span>
<svg width="720" height="429" viewBox="0 0 720 429"><rect x="267.80" y="235.10" width="278.30" height="10.00" fill="#ebebeb"/><rect x="267.80" y="244.80" width="278.30" height="0.40" fill="#dedede"/></svg>
<span class="t" style="transform:translate(278.50px,238.04px) rotate(0.03deg) scale(1.0000,1);font-size:5.6px;color:#1e1e1e;letter-spacing:0.001px;">2020.11.19 04:00</span>
<span class="t" style="transform:translate(356.90px,238.04px) rotate(0.1deg) scale(0.9534,1);font-size:5.6px;color:#1e1e1e;">1.18419</span>
<span class="t" style="transform:translate(398.70px,238.04px) rotate(0.1deg) scale(0.9534,1);font-size:5.6px;color:#1e1e1e;">1.18505</span>
<span class="t" style="transform:translate(440.00px,238.04px) rotate(0.1deg) scale(0.9534,1);font-size:5.6px;color:#1e1e1e;">1.18419</span>
<span class="t" style="transform:translate(481.70px,238.04px) rotate(0.1deg) scale(0.9534,1);font-size:5.6px;color:#1e1e1e;">1.18448</span>
<span class="t" style="transform:translate(532.20px,238.04px) rotate(0.1deg) scale(0.8669,1);font-size:5.6px;color:#1e1e1e;">1832</span>
<svg width="720" height="429" viewBox="0 0 720 429"><rect x="267.80" y="254.80" width="278.30" height="0.40" fill="#dedede"/></svg>
<span class="t" style="transform:translate(278.50px,248.04px) rotate(0.03deg) scale(1.0000,1);font-size:5.6px;color:#1e1e1e;letter-spacing:0.001px;">2020.11.19 03:00</span>
<span class="t" style="transform:translate(356.90px,248.04px) rotate(0.1deg) scale(0.9534,1);font-size:5.6px;color:#1e1e1e;">1.18363</span>
<span class="t" style="transform:translate(398.70px,248.04px) rotate(0.1deg) scale(0.9534,1);font-size:5.6px;color:#1e1e1e;">1.18426</span>
<span class="t" style="transform:translate(440.00px,248.04px) rotate(0.1deg) scale(0.9534,1);font-size:5.6px;color:#1e1e1e;">1.18328</span>
<span class="t" style="transform:translate(481.70px,248.04px) rotate(0.1deg) scale(0.9534,1);font-size:5.6px;color:#1e1e1e;">1.18420</span>
<span class="t" style="transform:translate(532.20px,248.04px) rotate(0.1deg) scale(0.8669,1);font-size:5.6px;color:#1e1e1e;">2165</span>
<svg width="720" height="429" viewBox="0 0 720 429"><rect x="267.80" y="255.10" width="278.30" height="10.00" fill="#ebebeb"/><rect x="267.80" y="264.80" width="278.30" height="0.40" fill="#dedede"/></svg>
<span class="t" style="transform:translate(278.50px,258.04px) rotate(0.03deg) scale(1.0000,1);font-size:5.6px;color:#1e1e1e;letter-spacing:0.001px;">2020.11.19 02:00</span>
<span class="t" style="transform:translate(356.90px,258.04px) rotate(0.1deg) scale(0.9534,1);font-size:5.6px;color:#1e1e1e;">1.18441</span>
<span class="t" style="transform:translate(398.70px,258.04px) rotate(0.1deg) scale(0.9534,1);font-size:5.6px;color:#1e1e1e;">1.18441</span>
<span class="t" style="transform:translate(440.00px,258.04px) rotate(0.1deg) scale(0.9534,1);font-size:5.6px;color:#1e1e1e;">1.18310</span>
<span class="t" style="transform:translate(481.70px,258.04px) rotate(0.1deg) scale(0.9534,1);font-size:5.6px;color:#1e1e1e;">1.18363</span>
<span class="t" style="transform:translate(532.20px,258.04px) rotate(0.1deg) scale(0.8669,1);font-size:5.6px;color:#1e1e1e;">2750</span>
<svg width="720" height="429" viewBox="0 0 720 429"><rect x="267.80" y="274.80" width="278.30" height="0.40" fill="#dedede"/></svg>
<span class="t" style="transform:translate(278.50px,268.04px) rotate(0.03deg) scale(1.0000,1);font-size:5.6px;color:#1e1e1e;letter-spacing:0.001px;">2020.11.19 01:00</span>
<span class="t" style="transform:translate(356.90px,268.04px) rotate(0.1deg) scale(0.9534,1);font-size:5.6px;color:#1e1e1e;">1.18499</span>
<span class="t" style="transform:translate(398.70px,268.04px) rotate(0.1deg) scale(0.9534,1);font-size:5.6px;color:#1e1e1e;">1.18527</span>
<span class="t" style="transform:translate(440.00px,268.04px) rotate(0.1deg) scale(0.9534,1);font-size:5.6px;color:#1e1e1e;">1.18441</span>
<span class="t" style="transform:translate(481.70px,268.04px) rotate(0.1deg) scale(0.9534,1);font-size:5.6px;color:#1e1e1e;">1.18445</span>
<span class="t" style="transform:translate(535.00px,268.04px) rotate(0.1deg) scale(0.8562,1);font-size:5.6px;color:#1e1e1e;">856</span>
<svg width="720" height="429" viewBox="0 0 720 429"><rect x="267.80" y="275.10" width="278.30" height="10.00" fill="#ebebeb"/><rect x="267.80" y="284.80" width="278.30" height="0.40" fill="#dedede"/></svg>
<span class="t" style="transform:translate(278.50px,278.04px) rotate(0.03deg) scale(1.0000,1);font-size:5.6px;color:#1e1e1e;letter-spacing:0.001px;">2020.11.19 00:00</span>
<span class="t" style="transform:translate(356.90px,278.04px) rotate(0.1deg) scale(0.9534,1);font-size:5.6px;color:#1e1e1e;">1.18521</span>
<span class="t" style="transform:translate(398.70px,278.04px) rotate(0.1deg) scale(0.9534,1);font-size:5.6px;color:#1e1e1e;">1.18558</span>
<span class="t" style="transform:translate(440.00px,278.04px) rotate(0.1deg) scale(0.9534,1);font-size:5.6px;color:#1e1e1e;">1.18494</span>
<span class="t" style="transform:translate(481.70px,278.04px) rotate(0.1deg) scale(0.9534,1);font-size:5.6px;color:#1e1e1e;">1.18498</span>
<span class="t" style="transform:translate(535.00px,278.04px) rotate(0.1deg) scale(0.8562,1);font-size:5.6px;color:#1e1e1e;">491</span>
<svg width="720" height="429" viewBox="0 0 720 429"><rect x="267.80" y="294.80" width="278.30" height="0.40" fill="#dedede"/></svg>
<span class="t" style="transform:translate(278.50px,288.04px) rotate(0.03deg) scale(1.0000,1);font-size:5.6px;color:#1e1e1e;letter-spacing:0.001px;">2020.11.18 23:00</span>
<span class="t" style="transform:translate(356.90px,288.04px) rotate(0.1deg) scale(0.9534,1);font-size:5.6px;color:#1e1e1e;">1.18525</span>
<span class="t" style="transform:translate(398.70px,288.04px) rotate(0.1deg) scale(0.9534,1);font-size:5.6px;color:#1e1e1e;">1.18556</span>
<span class="t" style="transform:translate(440.00px,288.04px) rotate(0.1deg) scale(0.9534,1);font-size:5.6px;color:#1e1e1e;">1.18483</span>
<span class="t" style="transform:translate(481.70px,288.04px) rotate(0.1deg) scale(0.9534,1);font-size:5.6px;color:#1e1e1e;">1.18521</span>
<span class="t" style="transform:translate(532.20px,288.04px) rotate(0.1deg) scale(0.8669,1);font-size:5.6px;color:#1e1e1e;">1013</span>
<svg width="720" height="429" viewBox="0 0 720 429"><rect x="267.80" y="295.10" width="278.30" height="10.00" fill="#ebebeb"/><rect x="267.80" y="304.80" width="278.30" height="0.40" fill="#dedede"/></svg>
<span class="t" style="transform:translate(278.50px,298.04px) rotate(0.03deg) scale(1.0000,1);font-size:5.6px;color:#1e1e1e;letter-spacing:0.001px;">2020.11.18 22:00</span>
<span class="t" style="transform:translate(356.90px,298.04px) rotate(0.1deg) scale(0.9534,1);font-size:5.6px;color:#1e1e1e;">1.18630</span>
<span class="t" style="transform:translate(398.70px,298.04px) rotate(0.1deg) scale(0.9534,1);font-size:5.6px;color:#1e1e1e;">1.18664</span>
<span class="t" style="transform:translate(440.00px,298.04px) rotate(0.1deg) scale(0.9534,1);font-size:5.6px;color:#1e1e1e;">1.18520</span>
<span class="t" style="transform:translate(481.70px,298.04px) rotate(0.1deg) scale(0.9534,1);font-size:5.6px;color:#1e1e1e;">1.18520</span>
<span class="t" style="transform:translate(532.20px,298.04px) rotate(0.1deg) scale(0.8669,1);font-size:5.6px;color:#1e1e1e;">1905</span>
<svg width="720" height="429" viewBox="0 0 720 429"><rect x="267.80" y="314.80" width="278.30" height="0.40" fill="#dedede"/></svg>
<span class="t" style="transform:translate(278.50px,308.04px) rotate(0.03deg) scale(1.0000,1);font-size:5.6px;color:#1e1e1e;letter-spacing:0.001px;">2020.11.18 21:00</span>
<span class="t" style="transform:translate(356.90px,308.04px) rotate(0.1deg) scale(0.9534,1);font-size:5.6px;color:#1e1e1e;">1.18645</span>
<span class="t" style="transform:translate(398.70px,308.04px) rotate(0.1deg) scale(0.9534,1);font-size:5.6px;color:#1e1e1e;">1.18671</span>
<span class="t" style="transform:translate(440.00px,308.04px) rotate(0.1deg) scale(0.9534,1);font-size:5.6px;color:#1e1e1e;">1.18538</span>
<span class="t" style="transform:translate(481.70px,308.04px) rotate(0.1deg) scale(0.9534,1);font-size:5.6px;color:#1e1e1e;">1.18630</span>
<span class="t" style="transform:translate(532.20px,308.04px) rotate(0.1deg) scale(0.8669,1);font-size:5.6px;color:#1e1e1e;">1955</span>
<svg width="720" height="429" viewBox="0 0 720 429"><rect x="336.80" y="126.40" width="0.50" height="184.70" fill="#dcdcdc"/><rect x="378.40" y="126.40" width="0.50" height="184.70" fill="#dcdcdc"/><rect x="420.00" y="126.40" width="0.50" height="184.70" fill="#dcdcdc"/><rect x="461.20" y="126.40" width="0.50" height="184.70" fill="#dcdcdc"/><rect x="502.90" y="126.40" width="0.50" height="184.70" fill="#dcdcdc"/><rect x="545.60" y="126.40" width="0.50" height="184.70" fill="#dcdcdc"/><rect x="267.80" y="134.80" width="287.40" height="0.50" fill="#d5d5d5"/></svg>
<span class="t" style="transform:translate(270.00px,128.71px) rotate(0.1deg) scale(0.9022,1);font-size:5.6px;color:#3c3c3c;">Время</span>
<span class="t" style="transform:translate(349.40px,128.68px) rotate(0.03deg) scale(1.0000,1);font-size:5.6px;color:#3c3c3c;letter-spacing:0.085px;">Открытие</span>
<span class="t" style="transform:translate(392.00px,128.68px) rotate(0.1deg) scale(0.9409,1);font-size:5.6px;color:#3c3c3c;">Максимум</span>
<span class="t" style="transform:translate(435.90px,128.68px) rotate(0.1deg) scale(0.9219,1);font-size:5.6px;color:#3c3c3c;">Минимум</span>
<span class="t" style="transform:translate(475.20px,128.68px) rotate(0.03deg) scale(1.0000,1);font-size:5.6px;color:#3c3c3c;letter-spacing:0.013px;">Закрытие</span>
<span class="t" style="transform:translate(525.20px,128.71px) rotate(0.1deg) scale(0.9528,1);font-size:5.6px;color:#3c3c3c;">Объем</span>
<svg width="720" height="429" viewBox="0 0 720 429"><rect x="546.10" y="126.40" width="9.10" height="184.70" fill="#f1f1f1"/><rect x="547.00" y="135.40" width="7.40" height="7.60" fill="#cdcdcd"/></svg>
<svg width="720" height="429" viewBox="0 0 720 429">
<path d="M273 136.40 v7.4" stroke="#2d74c4" stroke-width="0.5"/><rect x="271.5" y="137.20" width="3" height="5.8" rx="1.3" fill="#3b8ee6" stroke="#2d74c4" stroke-width="0.6"/>
<path d="M272.6 138.50 v2.2" stroke="#cfe6ff" stroke-width="0.6"/>
<path d="M273 146.40 v7.4" stroke="#2d74c4" stroke-width="0.5"/><rect x="271.5" y="147.20" width="3" height="5.8" rx="1.3" fill="#fff" stroke="#2d74c4" stroke-width="0.6"/>
<path d="M273 156.40 v7.4" stroke="#2d74c4" stroke-width="0.5"/><rect x="271.5" y="157.20" width="3" height="5.8" rx="1.3" fill="#3b8ee6" stroke="#2d74c4" stroke-width="0.6"/>
<path d="M272.6 158.50 v2.2" stroke="#cfe6ff" stroke-width="0.6"/>
<path d="M273 166.40 v7.4" stroke="#2d74c4" stroke-width="0.5"/><rect x="271.5" y="167.20" width="3" height="5.8" rx="1.3" fill="#fff" stroke="#2d74c4" stroke-width="0.6"/>
<path d="M273 176.40 v7.4" stroke="#2d74c4" stroke-width="0.5"/><rect x="271.5" y="177.20" width="3" height="5.8" rx="1.3" fill="#3b8ee6" stroke="#2d74c4" stroke-width="0.6"/>
<path d="M272.6 178.50 v2.2" stroke="#cfe6ff" stroke-width="0.6"/>
<path d="M273 186.40 v7.4" stroke="#2d74c4" stroke-width="0.5"/><rect x="271.5" y="187.20" width="3" height="5.8" rx="1.3" fill="#3b8ee6" stroke="#2d74c4" stroke-width="0.6"/>
<path d="M272.6 188.50 v2.2" stroke="#cfe6ff" stroke-width="0.6"/>
<path d="M273 196.40 v7.4" stroke="#2d74c4" stroke-width="0.5"/><rect x="271.5" y="197.20" width="3" height="5.8" rx="1.3" fill="#3b8ee6" stroke="#2d74c4" stroke-width="0.6"/>
<path d="M272.6 198.50 v2.2" stroke="#cfe6ff" stroke-width="0.6"/>
<path d="M273 206.40 v7.4" stroke="#2d74c4" stroke-width="0.5"/><rect x="271.5" y="207.20" width="3" height="5.8" rx="1.3" fill="#fff" stroke="#2d74c4" stroke-width="0.6"/>
<path d="M273 216.40 v7.4" stroke="#2d74c4" stroke-width="0.5"/><rect x="271.5" y="217.20" width="3" height="5.8" rx="1.3" fill="#fff" stroke="#2d74c4" stroke-width="0.6"/>
<path d="M273 226.40 v7.4" stroke="#2d74c4" stroke-width="0.5"/><rect x="271.5" y="227.20" width="3" height="5.8" rx="1.3" fill="#3b8ee6" stroke="#2d74c4" stroke-width="0.6"/>
<path d="M272.6 228.50 v2.2" stroke="#cfe6ff" stroke-width="0.6"/>
<path d="M273 236.40 v7.4" stroke="#2d74c4" stroke-width="0.5"/><rect x="271.5" y="237.20" width="3" height="5.8" rx="1.3" fill="#fff" stroke="#2d74c4" stroke-width="0.6"/>
<path d="M273 246.40 v7.4" stroke="#2d74c4" stroke-width="0.5"/><rect x="271.5" y="247.20" width="3" height="5.8" rx="1.3" fill="#fff" stroke="#2d74c4" stroke-width="0.6"/>
<path d="M273 256.40 v7.4" stroke="#2d74c4" stroke-width="0.5"/><rect x="271.5" y="257.20" width="3" height="5.8" rx="1.3" fill="#3b8ee6" stroke="#2d74c4" stroke-width="0.6"/>
<path d="M272.6 258.50 v2.2" stroke="#cfe6ff" stroke-width="0.6"/>
<path d="M273 266.40 v7.4" stroke="#2d74c4" stroke-width="0.5"/><rect x="271.5" y="267.20" width="3" height="5.8" rx="1.3" fill="#3b8ee6" stroke="#2d74c4" stroke-width="0.6"/>
<path d="M272.6 268.50 v2.2" stroke="#cfe6ff" stroke-width="0.6"/>
<path d="M273 276.40 v7.4" stroke="#2d74c4" stroke-width="0.5"/><rect x="271.5" y="277.20" width="3" height="5.8" rx="1.3" fill="#3b8ee6" stroke="#2d74c4" stroke-width="0.6"/>
<path d="M272.6 278.50 v2.2" stroke="#cfe6ff" stroke-width="0.6"/>
<path d="M273 286.40 v7.4" stroke="#2d74c4" stroke-width="0.5"/><rect x="271.5" y="287.20" width="3" height="5.8" rx="1.3" fill="#3b8ee6" stroke="#2d74c4" stroke-width="0.6"/>
<path d="M272.6 288.50 v2.2" stroke="#cfe6ff" stroke-width="0.6"/>
<path d="M273 296.40 v7.4" stroke="#2d74c4" stroke-width="0.5"/><rect x="271.5" y="297.20" width="3" height="5.8" rx="1.3" fill="#3b8ee6" stroke="#2d74c4" stroke-width="0.6"/>
<path d="M272.6 298.50 v2.2" stroke="#cfe6ff" stroke-width="0.6"/>
<path d="M273 306.40 v7.4" stroke="#2d74c4" stroke-width="0.5"/><rect x="271.5" y="307.20" width="3" height="5.8" rx="1.3" fill="#3b8ee6" stroke="#2d74c4" stroke-width="0.6"/>
<path d="M272.6 308.50 v2.2" stroke="#cfe6ff" stroke-width="0.6"/>
<path d="M548.8 131.6 l1.9 -1.9 l1.9 1.9 M548.8 305.6 l1.9 1.9 l1.9 -1.9" fill="none" stroke="#606060" stroke-width="0.7"/>
</svg>
<svg width="720" height="429" viewBox="0 0 720 429"><rect x="266.70" y="311.70" width="289.60" height="4.60" fill="#f0f0f0"/><rect x="267.20" y="311.10" width="288.60" height="0.60" fill="#a3a9b0"/><rect x="166.30" y="316.50" width="96.20" height="10.90" fill="#e2e2e2"/><rect x="166.60" y="316.80" width="95.60" height="10.30" fill="none" stroke="#adadad" stroke-width="0.6"/></svg>
<span class="t" style="transform:translate(201.15px,319.66px) rotate(0.03deg) scale(1.0000,1);font-size:5.8px;color:#222;letter-spacing:0.002px;">Загрузить</span>
<svg width="720" height="429" viewBox="0 0 720 429"><rect x="267.50" y="316.50" width="40.00" height="10.90" fill="#e2e2e2"/><rect x="267.80" y="316.80" width="39.40" height="10.30" fill="none" stroke="#adadad" stroke-width="0.6"/></svg>
<span class="t" style="transform:translate(275.00px,319.67px) rotate(0.03deg) scale(1.0000,1);font-size:5.8px;color:#222;letter-spacing:-0.079px;">Добавить</span>
<svg width="720" height="429" viewBox="0 0 720 429"><rect x="312.30" y="316.50" width="40.00" height="10.90" fill="#e2e2e2"/><rect x="312.60" y="316.80" width="39.40" height="10.30" fill="none" stroke="#adadad" stroke-width="0.6"/></svg>
<span class="t" style="transform:translate(323.05px,319.69px) rotate(0.1deg) scale(0.9443,1);font-size:5.8px;color:#222;">Правка</span>
<svg width="720" height="429" viewBox="0 0 720 429"><rect x="357.30" y="316.50" width="40.00" height="10.90" fill="#e2e2e2"/><rect x="357.60" y="316.80" width="39.40" height="10.30" fill="none" stroke="#adadad" stroke-width="0.6"/></svg>
<span class="t" style="transform:translate(366.55px,319.68px) rotate(0.03deg) scale(1.0000,1);font-size:5.8px;color:#222;letter-spacing:-0.092px;">Удалить</span>
<svg width="720" height="429" viewBox="0 0 720 429"><rect x="406.10" y="316.50" width="43.70" height="10.90" fill="#e2e2e2"/><rect x="406.40" y="316.80" width="43.10" height="10.30" fill="none" stroke="#adadad" stroke-width="0.6"/></svg>
<span class="t" style="transform:translate(417.20px,319.68px) rotate(0.03deg) scale(1.0000,1);font-size:5.8px;color:#222;letter-spacing:-0.042px;">Экспорт</span>
<svg width="720" height="429" viewBox="0 0 720 429"><rect x="454.30" y="316.50" width="44.00" height="10.90" fill="#e2e2e2"/><rect x="454.60" y="316.80" width="43.40" height="10.30" fill="none" stroke="#adadad" stroke-width="0.6"/></svg>
<span class="t" style="transform:translate(466.55px,319.69px) rotate(0.1deg) scale(0.9616,1);font-size:5.8px;color:#222;">Импорт</span>
<svg width="720" height="429" viewBox="0 0 720 429"><rect x="513.90" y="316.50" width="40.80" height="10.90" fill="#e2e2e2"/><rect x="514.20" y="316.80" width="40.20" height="10.30" fill="none" stroke="#3c8fdc" stroke-width="0.6"/></svg>
<span class="t" style="transform:translate(523.30px,319.68px) rotate(0.03deg) scale(1.0000,1);font-size:5.8px;color:#222;letter-spacing:-0.049px;">Закрыть</span>
<svg width="720" height="429" viewBox="0 0 720 429">
<rect x="115.30" y="9.40" width="29.10" height="14.00" fill="none" stroke="#b9281a" stroke-width="2.0"/>
<rect x="289.40" y="86.60" width="139.90" height="23.80" fill="none" stroke="#b9281a" stroke-width="2.0"/>
<rect x="171.70" y="151.90" width="58.10" height="10.80" fill="none" stroke="#b9281a" stroke-width="2.0"/>
<rect x="185.20" y="199.10" width="52.30" height="8.40" fill="none" stroke="#b9281a" stroke-width="2.0"/>
<rect x="158.20" y="307.40" width="106.60" height="26.20" fill="none" stroke="#b9281a" stroke-width="2.0"/>
<polygon points="139.94,21.97 295.73,97.36 293.38,99.24 303.60,98.20 297.90,89.65 297.94,92.66 140.66,20.43" fill="#b9281a"/>
<polygon points="304.14,105.53 228.79,148.79 228.44,145.91 224.30,154.20 233.56,154.50 231.20,152.82 305.06,107.07" fill="#b9281a"/>
<polygon points="223.91,157.97 227.81,193.25 225.83,192.89 231.40,198.70 234.92,191.47 233.15,192.41 226.09,157.63" fill="#b9281a"/>
<polygon points="229.80,206.48 226.72,306.79 223.95,305.51 228.90,313.80 234.14,305.69 231.32,306.87 231.80,206.52" fill="#b9281a"/>
</svg>
</div></body></html>
